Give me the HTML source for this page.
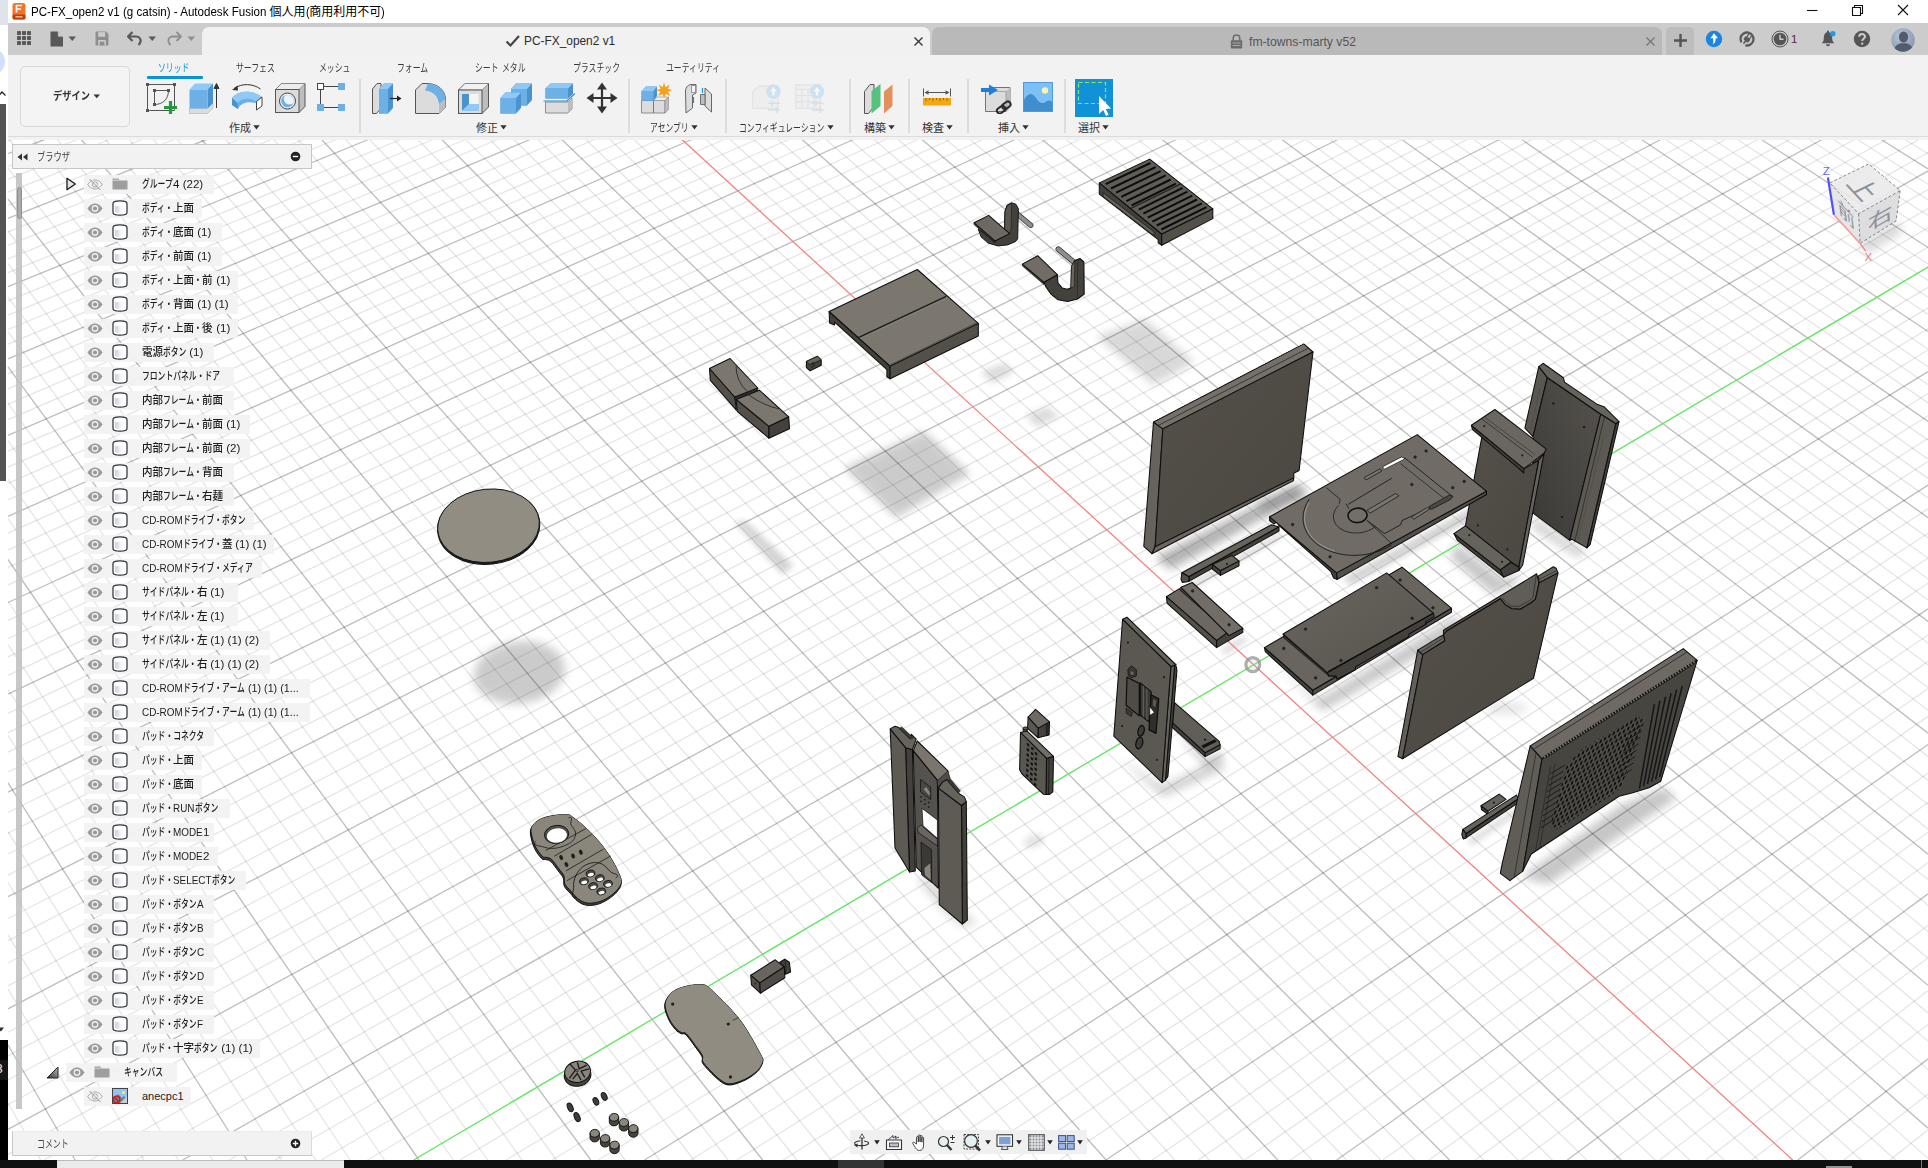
<!DOCTYPE html><html lang="ja"><head><meta charset="utf-8"><title>PC-FX_open2 v1 - Autodesk Fusion</title><style>
*{box-sizing:border-box;margin:0;padding:0}
html,body{width:1928px;height:1168px;overflow:hidden;background:#fff}
body{position:relative;font-family:"Liberation Sans","Noto Sans CJK JP",sans-serif;font-size:11px;color:#222}
.abs{position:absolute}
.k{display:inline-block;transform-origin:0 50%;white-space:pre;vertical-align:baseline}
.t{position:absolute;white-space:nowrap;line-height:1}
#vp{position:absolute;left:0;top:0;width:1928px;height:1168px}
#title{position:absolute;left:8px;top:0;width:1920px;height:23px;background:#fff}
#tabbar{position:absolute;left:8px;top:23px;width:1920px;height:32px;background:#cccccc}
#toolbar{position:absolute;left:8px;top:55px;width:1920px;height:84.5px;background:#f2f2f2}
#toolbar:after{content:'';position:absolute;left:0;top:81px;width:100%;height:1.2px;background:#dbdbdb}
.tab1{position:absolute;left:194px;top:4px;width:728px;height:28px;background:#f1f1f1;border-radius:7px 7px 0 0}
.tab2{position:absolute;left:924px;top:4px;width:730px;height:28px;background:#b9b9b9;border-radius:7px 7px 0 0}
.tab3{position:absolute;left:1658px;top:4px;width:28px;height:28px;background:#bdbdbd;border-radius:5px 5px 0 0}
.sep{position:absolute;top:24px;width:1.6px;height:53.5px;background:#dcdcdc}
.row{position:absolute;height:19.6px;background:rgba(242,242,242,.94)}
.lbl{position:absolute;white-space:nowrap;line-height:14px;font-size:11px;color:#1c1c1c;font-weight:500}
.glbl{position:absolute;white-space:nowrap;line-height:14px;font-size:11px;color:#333}
.hdr{position:absolute;left:12px;width:300px;height:25px;background:#f2f2f2;border:1px solid #c6c6c6}
</style></head><body>
<svg id="vp" viewBox="0 0 1928 1168" width="1928" height="1168">
<defs><filter id="bl8" x="-40%" y="-40%" width="180%" height="180%"><feGaussianBlur stdDeviation="8"/></filter><filter id="bl5" x="-40%" y="-40%" width="180%" height="180%"><feGaussianBlur stdDeviation="5"/></filter><filter id="bl4" x="-40%" y="-40%" width="180%" height="180%"><feGaussianBlur stdDeviation="4"/></filter><filter id="bl3" x="-40%" y="-40%" width="180%" height="180%"><feGaussianBlur stdDeviation="3"/></filter><linearGradient id="gf" x1="0" y1="0" x2="1" y2="1"><stop offset="0" stop-color="#55514a"/><stop offset="1" stop-color="#4a4640"/></linearGradient><linearGradient id="gd" x1="1" y1="0" x2="0" y2="1"><stop offset="0" stop-color="#56534e"/><stop offset="1" stop-color="#3b3936"/></linearGradient><linearGradient id="gt" x1="0" y1="0" x2="1" y2="1"><stop offset="0" stop-color="#6a665f"/><stop offset="1" stop-color="#56534d"/></linearGradient></defs>
<rect x="0" y="0" width="1928" height="1168" fill="#fff"/>
<path d="M8.0 141.2L16.3 138.0M8.0 166.4L81.0 138.0M8.0 179.2L113.4 138.0M8.0 192.1L145.7 138.0M8.0 205.2L178.0 138.0M8.0 231.8L242.7 138.0M8.0 245.3L275.0 138.0M8.0 258.9L307.4 138.0M8.0 272.7L339.7 138.0M8.0 300.8L404.4 138.0M8.0 315.1L436.7 138.0M8.0 329.5L469.0 138.0M8.0 344.1L501.3 138.0M8.0 373.8L566.0 138.0M8.0 388.9L598.3 138.0M8.0 404.2L630.6 138.0M8.0 419.6L662.9 138.0M8.0 451.1L727.5 138.0M8.0 467.1L759.8 138.0M8.0 483.3L792.1 138.0M8.0 499.8L824.4 138.0M8.0 533.2L889.0 138.0M8.0 550.2L921.3 138.0M8.0 567.4L953.6 138.0M8.0 584.9L985.9 138.0M8.0 620.4L1050.5 138.0M8.0 638.5L1082.8 138.0M8.0 656.8L1115.1 138.0M8.0 675.4L1147.3 138.0M8.0 713.3L1211.9 138.0M8.0 732.6L1244.2 138.0M8.0 752.2L1276.5 138.0M8.0 772.0L1308.7 138.0M8.0 812.5L1373.3 138.0M8.0 833.1L1405.5 138.0M8.0 854.0L1437.8 138.0M8.0 875.2L1470.1 138.0M8.0 918.5L1534.6 138.0M8.0 940.6L1566.8 138.0M8.0 963.0L1599.1 138.0M8.0 985.8L1631.4 138.0M8.0 1032.2L1695.9 138.0M8.0 1055.9L1728.1 138.0M8.0 1080.0L1760.4 138.0M8.0 1104.5L1792.6 138.0M8.0 1154.4L1857.1 138.0M44.1 1160.0L1889.3 138.0M90.3 1160.0L1921.6 138.0M136.5 1160.0L1928.0 152.5M228.9 1160.0L1928.0 189.6M275.0 1160.0L1928.0 208.5M321.2 1160.0L1928.0 227.8M367.4 1160.0L1928.0 247.3M459.8 1160.0L1928.0 287.4M506.0 1160.0L1928.0 307.9M552.1 1160.0L1928.0 328.8M598.3 1160.0L1928.0 350.0M690.6 1160.0L1928.0 393.5M736.8 1160.0L1928.0 415.8M783.0 1160.0L1928.0 438.5M829.1 1160.0L1928.0 461.6M921.4 1160.0L1928.0 508.9M967.6 1160.0L1928.0 533.3M1013.7 1160.0L1928.0 558.0M1059.9 1160.0L1928.0 583.2M1152.1 1160.0L1928.0 635.0M1198.3 1160.0L1928.0 661.6M1244.4 1160.0L1928.0 688.7M1290.5 1160.0L1928.0 716.4M1382.8 1160.0L1928.0 773.2M1428.9 1160.0L1928.0 802.5M1475.0 1160.0L1928.0 832.3M1521.2 1160.0L1928.0 862.8M1613.4 1160.0L1928.0 925.5M1659.5 1160.0L1928.0 957.8M1705.6 1160.0L1928.0 990.8M1751.7 1160.0L1928.0 1024.4M1843.9 1160.0L1928.0 1094.0M1890.0 1160.0L1928.0 1129.8" stroke="#000" stroke-opacity=".10" stroke-width="1.3" fill="none"/>
<path d="M8.0 1103.0L40.7 1160.0M8.0 989.0L109.5 1160.0M8.0 934.8L143.9 1160.0M8.0 882.5L178.2 1160.0M8.0 831.9L212.6 1160.0M8.0 735.4L281.4 1160.0M8.0 689.3L315.8 1160.0M8.0 644.7L350.1 1160.0M8.0 601.5L384.5 1160.0M8.0 518.7L453.3 1160.0M8.0 479.2L487.6 1160.0M8.0 440.7L522.0 1160.0M8.0 403.3L556.4 1160.0M8.0 331.6L625.1 1160.0M8.0 297.2L659.5 1160.0M8.0 263.6L693.9 1160.0M8.0 231.0L728.2 1160.0M8.0 168.2L796.9 1160.0M8.0 138.0L831.3 1160.0M32.0 138.0L865.6 1160.0M56.0 138.0L900.0 1160.0M104.1 138.0L968.7 1160.0M128.1 138.0L1003.1 1160.0M152.1 138.0L1037.4 1160.0M176.1 138.0L1071.8 1160.0M224.2 138.0L1140.4 1160.0M248.2 138.0L1174.8 1160.0M272.2 138.0L1209.1 1160.0M296.2 138.0L1243.5 1160.0M344.2 138.0L1312.1 1160.0M368.2 138.0L1346.5 1160.0M392.3 138.0L1380.8 1160.0M416.3 138.0L1415.1 1160.0M464.3 138.0L1483.8 1160.0M488.3 138.0L1518.1 1160.0M512.3 138.0L1552.5 1160.0M536.3 138.0L1586.8 1160.0M584.3 138.0L1655.4 1160.0M608.3 138.0L1689.7 1160.0M632.3 138.0L1724.1 1160.0M656.3 138.0L1758.4 1160.0M704.3 138.0L1827.0 1160.0M728.3 138.0L1861.3 1160.0M752.3 138.0L1895.6 1160.0M776.3 138.0L1928.0 1158.3M824.2 138.0L1928.0 1098.6M848.2 138.0L1928.0 1069.5M872.2 138.0L1928.0 1041.0M896.2 138.0L1928.0 1012.9M944.2 138.0L1928.0 958.2M968.2 138.0L1928.0 931.5M992.2 138.0L1928.0 905.3M1016.1 138.0L1928.0 879.5M1064.1 138.0L1928.0 829.2M1088.1 138.0L1928.0 804.6M1112.1 138.0L1928.0 780.4M1136.0 138.0L1928.0 756.6M1184.0 138.0L1928.0 710.2M1208.0 138.0L1928.0 687.5M1231.9 138.0L1928.0 665.1M1255.9 138.0L1928.0 643.1M1303.8 138.0L1928.0 600.1M1327.8 138.0L1928.0 579.0M1351.8 138.0L1928.0 558.3M1375.7 138.0L1928.0 537.9M1423.7 138.0L1928.0 497.9M1447.6 138.0L1928.0 478.4M1471.6 138.0L1928.0 459.1M1495.6 138.0L1928.0 440.1M1543.5 138.0L1928.0 402.9M1567.4 138.0L1928.0 384.7M1591.4 138.0L1928.0 366.7M1615.4 138.0L1928.0 349.0M1663.3 138.0L1928.0 314.2M1687.2 138.0L1928.0 297.2M1711.2 138.0L1928.0 280.4M1735.1 138.0L1928.0 263.9M1783.0 138.0L1928.0 231.4M1807.0 138.0L1928.0 215.5M1830.9 138.0L1928.0 199.7M1854.9 138.0L1928.0 184.2M1902.8 138.0L1928.0 153.8M1926.7 138.0L1928.0 138.8" stroke="#000" stroke-opacity=".10" stroke-width="1.3" fill="none"/>
<path d="M8.0 153.7L48.7 138.0M8.0 218.4L210.4 138.0M8.0 286.7L372.0 138.0M8.0 358.9L533.6 138.0M8.0 435.3L695.2 138.0M8.0 516.4L856.7 138.0M8.0 602.5L1018.2 138.0M8.0 694.2L1179.6 138.0M8.0 792.1L1341.0 138.0M8.0 896.7L1502.3 138.0M8.0 1008.8L1663.6 138.0M8.0 1129.3L1824.8 138.0M182.7 1160.0L1928.0 170.9M644.5 1160.0L1928.0 371.6M875.3 1160.0L1928.0 485.1M1106.0 1160.0L1928.0 608.9M1336.7 1160.0L1928.0 744.5M1567.3 1160.0L1928.0 893.8M1797.8 1160.0L1928.0 1058.8" stroke="#000" stroke-opacity=".255" stroke-width="1.35" fill="none"/>
<path d="M8.0 1045.0L75.1 1160.0M8.0 782.8L247.0 1160.0M8.0 559.5L418.9 1160.0M8.0 366.9L590.8 1160.0M8.0 199.2L762.6 1160.0M80.0 138.0L934.4 1160.0M200.1 138.0L1106.1 1160.0M320.2 138.0L1277.8 1160.0M440.3 138.0L1449.5 1160.0M560.3 138.0L1621.1 1160.0M800.3 138.0L1928.0 1128.2M920.2 138.0L1928.0 985.3M1040.1 138.0L1928.0 854.1M1160.0 138.0L1928.0 733.2M1279.9 138.0L1928.0 621.4M1399.7 138.0L1928.0 517.7M1519.5 138.0L1928.0 421.4M1639.3 138.0L1928.0 331.5M1759.1 138.0L1928.0 247.5M1878.8 138.0L1928.0 168.9" stroke="#000" stroke-opacity=".255" stroke-width="1.35" fill="none"/>
<g><path d="M1154.7 557.6L1298.0 483.7L1304.9 495.2L1170.8 569.2Z" fill="#000" opacity="0.3" filter="url(#bl5)"/><path d="M1189.3 584.2L1279.5 533.4L1281.8 536.8L1194.0 586.5Z" fill="#000" opacity="0.2" filter="url(#bl3)"/><ellipse cx="519.5" cy="672.5" rx="46" ry="31" transform="rotate(-8 519.5 672.5)" fill="#000" opacity=".2" filter="url(#bl5)"/><path d="M844.3 468.1L924.1 431.1L970.3 473.7L896.1 517.9Z" fill="#000" opacity="0.2" filter="url(#bl4)"/><path d="M1096.4 336.4L1145.4 319.0L1194.4 362.2L1153.8 385.4Z" fill="#000" opacity="0.15" filter="url(#bl4)"/><path d="M980.1 372.3L1003.9 362.2L1015.1 371.4L992.7 383.5Z" fill="#000" opacity="0.13" filter="url(#bl3)"/><path d="M1024.9 415.4L1047.3 406.4L1059.9 416.2L1037.5 427.5Z" fill="#000" opacity="0.13" filter="url(#bl3)"/><path d="M735.0 522.7L744.8 519.9L793.8 566.1L782.6 574.5Z" fill="#000" opacity="0.17" filter="url(#bl3)"/><path d="M1255.0 501.5L1303.0 484.1L1310.3 495.7L1263.7 513.2Z" fill="#000" opacity="0.15" filter="url(#bl5)"/><path d="M1342.3 578.7L1487.9 498.6L1493.8 507.3L1351.1 584.5Z" fill="#000" opacity="0.18" filter="url(#bl3)"/><path d="M1456.4 542.6L1503.5 580.0L1520.6 572.5L1514.2 585.3L1492.8 593.9L1450.0 557.5Z" fill="#000" opacity="0.22" filter="url(#bl5)"/><path d="M1535.6 516.9L1569.8 542.6L1586.9 550.0L1578.4 558.6L1531.3 527.6Z" fill="#000" opacity="0.18" filter="url(#bl5)"/><path d="M1275.8 662.9L1317.6 699.9L1455.9 616.3L1465.5 629.1L1322.4 711.1Z" fill="#000" opacity="0.22" filter="url(#bl5)"/><path d="M1221.1 650.0L1243.6 635.6L1247.6 640.4L1224.3 654.9Z" fill="#000" opacity="0.15" filter="url(#bl3)"/><path d="M1493.0 701.9L1526.9 703.8L1523.1 713.2L1485.5 715.1Z" fill="#000" opacity="0.1" filter="url(#bl5)"/><path d="M1119.1 758.0L1163.0 786.1L1222.7 758.0L1224.5 768.5L1163.0 796.6Z" fill="#000" opacity="0.2" filter="url(#bl5)"/><path d="M1173.5 733.4L1205.1 758.0L1220.9 751.0L1224.5 758.0L1205.1 768.5Z" fill="#000" opacity="0.15" filter="url(#bl3)"/><path d="M914.3 874.9L939.3 907.6L962.4 926.9L977.9 924.0L933.6 880.6Z" fill="#000" opacity="0.14" filter="url(#bl5)"/><path d="M1520.6 877.5L1621.2 804.8L1664.0 787.7L1676.8 798.4L1548.4 884.0Z" fill="#000" opacity="0.22" filter="url(#bl5)"/><path d="M1467.1 841.2L1514.2 809.1L1518.5 813.3L1471.4 845.4Z" fill="#000" opacity="0.15" filter="url(#bl3)"/><path d="M1834.9 216.8L1860.1 244.0L1896.1 221.9L1903.8 231.2L1866.8 253.8Z" fill="#000" opacity="0.16" filter="url(#bl5)"/><ellipse cx="1034" cy="841" rx="11" ry="6.5" transform="rotate(-20 1034 841)" fill="#000" opacity=".1" filter="url(#bl3)"/></g>
<path d="M680.3 138.0L1792.7 1160.0" stroke="#f27f7f" stroke-width="1.25" fill="none"/>
<path d="M413.6 1160.0L1928.0 267.2" stroke="#62e662" stroke-width="1.35" fill="none"/>
<g><path d="M1153.5 422.0L1162.8 428.9L1155.1 546.8L1151.9 553.7L1143.8 546.3Z" fill="#66635c" stroke="#0e0e0e" stroke-width="1.05" stroke-linejoin="round" /><path d="M1153.5 422.0L1303.7 343.9L1313.0 352.0L1162.8 428.9Z" fill="#75716a" stroke="#0e0e0e" stroke-width="1.05" stroke-linejoin="round" /><path d="M1158.4 425.4L1308.6 348.0" fill="none" stroke="#2a2926" stroke-width="0.8" stroke-linejoin="round" /><path d="M1162.8 428.9L1313.0 352.0L1299.1 470.5L1293.8 473.3L1293.8 477.9L1155.1 547.2Z" fill="url(#gf)" stroke="#0e0e0e" stroke-width="1.05" stroke-linejoin="round" /><path d="M1151.9 553.7L1155.1 546.8L1293.8 477.9L1293.3 480.7Z" fill="#6b675f" stroke="#0e0e0e" stroke-width="1.05" stroke-linejoin="round" /><path d="M1153.0 420.8L1303.3 342.7" fill="none" stroke="#fff" stroke-width="1.3" stroke-linejoin="round" stroke-dasharray="1.1 1.5"/><path d="M1181.9 572.7L1271.4 524.8L1279.0 526.9L1188.9 576.8Z" fill="#66635c" stroke="#0e0e0e" stroke-width="1.05" stroke-linejoin="round" /><path d="M1188.9 576.8L1279.0 526.9L1279.0 531.1L1188.9 581.4Z" fill="#44413c" stroke="#0e0e0e" stroke-width="1.05" stroke-linejoin="round" /><path d="M1181.9 572.7L1188.9 576.8L1188.9 581.4L1182.4 582.4L1181.0 579.6Z" fill="#534f49" stroke="#0e0e0e" stroke-width="1.05" stroke-linejoin="round" /><path d="M1212.4 564.6L1232.1 555.3L1239.0 561.1L1220.5 570.8Z" fill="#66635c" stroke="#0e0e0e" stroke-width="1.05" stroke-linejoin="round" /><path d="M1212.4 564.6L1220.5 570.8L1220.5 575.4L1212.4 569.2Z" fill="#44413c" stroke="#0e0e0e" stroke-width="1.05" stroke-linejoin="round" /><path d="M1220.5 570.8L1239.0 561.1L1239.0 565.7L1220.5 575.4Z" fill="#534f49" stroke="#0e0e0e" stroke-width="1.05" stroke-linejoin="round" /><circle cx="1227.0" cy="564.1" r="1" fill="#111" stroke="none" stroke-width="0.8"/><path d="M1099.3 182.9L1161.7 234.0L1161.7 245.2L1158.2 242.7L1158.2 239.6L1099.3 194.1Z" fill="#44413c" stroke="#0e0e0e" stroke-width="1.05" stroke-linejoin="round" /><path d="M1103.1 192.7L1154.0 231.9L1154.0 235.7L1103.1 196.5Z" fill="#66635c" stroke="#0e0e0e" stroke-width="0.6" stroke-linejoin="round" /><path d="M1161.7 234.0L1212.8 208.8L1212.8 218.6L1161.7 245.2Z" fill="#534f49" stroke="#0e0e0e" stroke-width="1.05" stroke-linejoin="round" /><path d="M1099.3 182.9L1149.7 159.1L1212.8 208.8L1161.7 234.0Z" fill="#5f5c56" stroke="#0e0e0e" stroke-width="1.05" stroke-linejoin="round" /><path d="M1130.6 208.5L1180.6 184.0" fill="none" stroke="#1c1c1c" stroke-width="1.2" stroke-linejoin="round" /><path d="M1105.7 184.2L1150.5 163.0" fill="none" stroke="#0c0c0c" stroke-width="2" stroke-linejoin="round" /><path d="M1110.9 188.5L1155.6 167.1" fill="none" stroke="#0c0c0c" stroke-width="2" stroke-linejoin="round" /><path d="M1116.1 192.7L1160.7 171.2" fill="none" stroke="#0c0c0c" stroke-width="2" stroke-linejoin="round" /><path d="M1121.3 196.9L1165.7 175.4" fill="none" stroke="#0c0c0c" stroke-width="2" stroke-linejoin="round" /><path d="M1126.4 201.2L1170.8 179.5" fill="none" stroke="#0c0c0c" stroke-width="2" stroke-linejoin="round" /><path d="M1131.6 205.4L1175.9 183.6" fill="none" stroke="#0c0c0c" stroke-width="2" stroke-linejoin="round" /><path d="M1138.8 209.6L1182.6 187.9" fill="none" stroke="#0c0c0c" stroke-width="2" stroke-linejoin="round" /><path d="M1143.3 213.6L1187.4 191.7" fill="none" stroke="#0c0c0c" stroke-width="2" stroke-linejoin="round" /><path d="M1147.8 217.6L1192.2 195.6" fill="none" stroke="#0c0c0c" stroke-width="2" stroke-linejoin="round" /><path d="M1152.3 221.6L1197.0 199.5" fill="none" stroke="#0c0c0c" stroke-width="2" stroke-linejoin="round" /><path d="M1156.8 225.5L1201.8 203.3" fill="none" stroke="#0c0c0c" stroke-width="2" stroke-linejoin="round" /><path d="M1161.3 229.5L1206.6 207.2" fill="none" stroke="#0c0c0c" stroke-width="2" stroke-linejoin="round" /><path d="M1013.9 211.3L1030.7 225.3" fill="none" stroke="#2a2a28" stroke-width="5.4" stroke-linejoin="round" stroke-linecap="round"/><path d="M1013.9 211.3L1030.7 225.3" fill="none" stroke="#8e8e8a" stroke-width="4" stroke-linejoin="round" stroke-linecap="round"/><path d="M978.2 229.1L981.0 236.8L988.0 243.1L997.8 245.9L1007.6 244.9L1015.3 241.7L1017.7 238.9L1018.4 208.8L1016.0 204.3L1011.5 202.7L1006.9 205.3L1004.8 211.6L1004.3 232.6L995.0 241.0Z" fill="#44413c" stroke="#0e0e0e" stroke-width=".9" stroke-linejoin="round"/><path d="M1005.1 211.6L1007.3 205.7L1011.5 203.5L1011.1 228.4L1009.7 233.6L1004.5 234.0Z" fill="#5a5751" stroke="#0e0e0e" stroke-width="0.5" stroke-linejoin="round" /><path d="M974.0 222.8L988.7 215.4L1009.7 233.6L995.0 241.0Z" fill="#6d6962" stroke="#0e0e0e" stroke-width="1.05" stroke-linejoin="round" /><path d="M974.0 222.8L995.0 241.0L995.0 243.0L974.4 224.8Z" fill="#33312e" stroke="#0e0e0e" stroke-width="0.6" stroke-linejoin="round" /><path d="M1058.3 249.1L1073.7 262.0" fill="none" stroke="#2a2a28" stroke-width="5.4" stroke-linejoin="round" stroke-linecap="round"/><path d="M1058.3 249.1L1073.7 262.0" fill="none" stroke="#8e8e8a" stroke-width="4" stroke-linejoin="round" stroke-linecap="round"/><path d="M1044.0 282.3L1057.3 274.6L1058.0 283.0L1062.2 287.9L1067.1 289.3L1070.9 287.9L1071.5 266.2L1074.8 260.6L1079.9 258.5L1083.9 262.0L1084.2 294.2L1077.6 299.0L1067.8 301.5L1058.0 299.8L1051.0 294.2L1046.1 287.2Z" fill="#44413c" stroke="#0e0e0e" stroke-width="1.05" stroke-linejoin="round" /><path d="M1071.5 266.2L1074.8 260.6L1074.3 286.5L1070.9 287.9Z" fill="#6a665f" stroke="#0e0e0e" stroke-width="0.5" stroke-linejoin="round" /><path d="M1079.9 258.5L1077.6 262.0L1077.4 299.0" fill="none" stroke="#222" stroke-width="0.6" stroke-linejoin="round" /><path d="M1022.3 264.1L1037.7 255.7L1057.3 274.6L1044.0 282.3Z" fill="#716d66" stroke="#0e0e0e" stroke-width="1.05" stroke-linejoin="round" /><path d="M1022.3 264.1L1044.0 282.3L1044.0 284.4L1022.6 266.0Z" fill="#33312e" stroke="#0e0e0e" stroke-width="0.6" stroke-linejoin="round" /><path d="M829.1 311.5L890.1 366.1L890.1 378.8L886.9 376.7L886.9 369.6L834.6 322.1L834.6 324.9L829.6 323.0Z" fill="#44413c" stroke="#0e0e0e" stroke-width="1.05" stroke-linejoin="round" /><path d="M890.1 366.1L978.3 323.4L978.3 336.0L890.1 378.8Z" fill="#534f49" stroke="#0e0e0e" stroke-width="1.05" stroke-linejoin="round" /><path d="M829.1 311.5L917.3 269.5L978.3 323.4L890.1 366.1Z" fill="#7b776f" stroke="#0e0e0e" stroke-width="1.05" stroke-linejoin="round" /><path d="M858.4 337.6L946.3 296.4" fill="none" stroke="#1c1c1c" stroke-width="1.6" stroke-linejoin="round" /><path d="M859.6 338.7L947.2 297.5" fill="none" stroke="#8d897f" stroke-width="0.7" stroke-linejoin="round" /><path d="M890.5 364.8L977.5 322.4" fill="none" stroke="#2a2926" stroke-width="0.6" stroke-linejoin="round" /><path d="M806.4 361.4L817.5 356.3L821.2 359.8L821.2 365.3L810.1 370.9L806.4 367.7Z" fill="#44413c" stroke="#0e0e0e" stroke-width="1.05" stroke-linejoin="round" /><path d="M806.4 361.4L817.5 356.3L821.2 359.8L810.1 364.8Z" fill="#66635c" stroke="#0e0e0e" stroke-width="0.6" stroke-linejoin="round" /><path d="M810.9 363.7L814.0 362.5L814.0 366.1L810.9 367.4" fill="none" stroke="#111" stroke-width="0.7" stroke-linejoin="round" /><path d="M709.5 368.5L734.8 397.0L736.4 410.1L710.3 380.4Z" fill="#534f49" stroke="#0e0e0e" stroke-width="1.05" stroke-linejoin="round" /><path d="M734.8 397.0L757.8 388.0L757.8 390.8L735.2 400.3Z" fill="#33312e" stroke="#0e0e0e" stroke-width="0.6" stroke-linejoin="round" /><path d="M709.5 368.5L730.1 358.5L757.8 388.0L734.8 397.0Z" fill="#7b776f" stroke="#0e0e0e" stroke-width="1.05" stroke-linejoin="round" /><path d="M736.1 365.8Q735.6 380.4 747.5 391.8" fill="none" stroke="#222" stroke-width=".8"/><path d="M736.1 399.4L768.9 426.3L768.9 438.2L737.2 411.3Z" fill="#534f49" stroke="#0e0e0e" stroke-width="1.05" stroke-linejoin="round" /><path d="M768.9 426.3L788.7 416.8L789.5 428.7L768.9 438.2Z" fill="#44413c" stroke="#0e0e0e" stroke-width="1.05" stroke-linejoin="round" /><path d="M736.1 399.4L759.4 390.2L788.7 416.8L768.9 426.3Z" fill="#7b776f" stroke="#0e0e0e" stroke-width="1.05" stroke-linejoin="round" /><path d="M748.3 394.6Q763.4 405.7 779.2 408.9" fill="none" stroke="#222" stroke-width=".8"/><ellipse cx="488.7" cy="527.0" rx="51.2" ry="37.2" transform="rotate(-6 488.7 527.0)" fill="#1c1c1c" stroke="#111" stroke-width="1" /><ellipse cx="488.5" cy="525.7" rx="51" ry="36.6" transform="rotate(-6 488.5 525.7)" fill="#918d82" stroke="#111" stroke-width="0.9" /><path d="M1538.8 366.7L1547.3 377.4L1533.0 436.6L1524.9 428.1Z" fill="#5a5751" stroke="#0e0e0e" stroke-width="1.05" stroke-linejoin="round" /><path d="M1547.3 377.8L1600.8 414.2L1569.8 540.4L1532.4 512.6L1533.0 436.6Z" fill="url(#gd)" stroke="#0e0e0e" stroke-width="1.05" stroke-linejoin="round" /><path d="M1538.8 366.7L1543.1 363.3L1563.4 377.8L1564.5 382.1L1597.6 404.6L1604.0 406.7L1619.0 421.7L1615.8 423.8L1600.8 414.2L1547.3 377.4Z" fill="#66635c" stroke="#0e0e0e" stroke-width="1.05" stroke-linejoin="round" /><path d="M1600.8 414.2L1615.8 423.8L1586.9 547.9L1572.0 539.3L1569.8 540.4Z" fill="#5c5953" stroke="#0e0e0e" stroke-width="1.05" stroke-linejoin="round" /><path d="M1604.5 416.5L1574.7 541.9" fill="none" stroke="#222" stroke-width="0.7" stroke-linejoin="round" /><path d="M1615.8 423.8L1619.0 421.7L1590.1 544.7L1586.9 547.9Z" fill="#44413c" stroke="#0e0e0e" stroke-width="1.05" stroke-linejoin="round" /><path d="M1539.9 388.5L1530.2 431.3" fill="none" stroke="#3a3835" stroke-width="0.6" stroke-linejoin="round" stroke-dasharray="1 1"/><path d="M1603.6 436.6L1578.4 538.3" fill="none" stroke="#3a3835" stroke-width="0.6" stroke-linejoin="round" stroke-dasharray="1 1"/><circle cx="1553.3" cy="403.5" r="1.2" fill="#1d1d1d" stroke="none" stroke-width="0.8"/><circle cx="1584.1" cy="427.0" r="1.2" fill="#1d1d1d" stroke="none" stroke-width="0.8"/><circle cx="1561.9" cy="516.9" r="1.2" fill="#1d1d1d" stroke="none" stroke-width="0.8"/><path d="M1453.9 533.6L1500.3 569.9L1503.5 576.8L1457.5 540.4Z" fill="#44413c" stroke="#0e0e0e" stroke-width="1.05" stroke-linejoin="round" /><path d="M1482.1 435.6L1523.8 468.7L1538.8 460.2L1518.9 567.2L1511.0 562.2L1465.4 525.9Z" fill="url(#gf)" stroke="#0e0e0e" stroke-width="1.05" stroke-linejoin="round" /><path d="M1538.8 460.2L1544.1 453.1L1522.7 565.0L1518.9 570.4L1518.9 567.2Z" fill="#66635c" stroke="#0e0e0e" stroke-width="1.05" stroke-linejoin="round" /><path d="M1500.3 569.9L1511.0 562.2L1518.9 567.2L1518.9 570.4L1503.5 577.2Z" fill="#44413c" stroke="#0e0e0e" stroke-width="1.05" stroke-linejoin="round" /><path d="M1453.9 533.6L1465.4 525.9L1511.0 561.8L1500.3 569.9Z" fill="#66635c" stroke="#0e0e0e" stroke-width="1.05" stroke-linejoin="round" /><path d="M1471.4 425.3L1523.8 468.7L1523.8 473.0L1518.5 468.1L1482.1 437.7L1472.5 429.6Z" fill="#44413c" stroke="#0e0e0e" stroke-width="1.05" stroke-linejoin="round" /><path d="M1471.4 425.3L1494.9 409.5L1546.3 449.1L1544.1 453.1L1523.8 468.7Z" fill="#6b6760" stroke="#0e0e0e" stroke-width="1.05" stroke-linejoin="round" /><path d="M1481.7 418.9L1532.4 457.0" fill="none" stroke="#222" stroke-width="0.7" stroke-linejoin="round" /><path d="M1484.2 416.8L1535.2 454.8" fill="none" stroke="#222" stroke-width="0.5" stroke-linejoin="round" /><circle cx="1484.2" cy="426.0" r="1.1" fill="#1d1d1d" stroke="none" stroke-width="0.8"/><circle cx="1522.3" cy="455.3" r="1.1" fill="#1d1d1d" stroke="none" stroke-width="0.8"/><circle cx="1477.8" cy="525.4" r="1.1" fill="#1d1d1d" stroke="none" stroke-width="0.8"/><circle cx="1469.3" cy="535.1" r="1.1" fill="#1d1d1d" stroke="none" stroke-width="0.8"/><circle cx="1507.3" cy="549.4" r="1.1" fill="#1d1d1d" stroke="none" stroke-width="0.8"/><circle cx="1502.0" cy="561.8" r="1.1" fill="#1d1d1d" stroke="none" stroke-width="0.8"/><path d="M1269.6 516.8L1336.5 572.9L1337.3 579.4L1333.6 578.0L1330.7 571.4L1278.3 524.8L1276.8 521.9L1273.9 524.1L1269.6 520.5Z" fill="#44413c" stroke="#0e0e0e" stroke-width="1.05" stroke-linejoin="round" /><path d="M1336.5 572.9L1486.5 491.3L1486.5 494.5L1337.3 579.4Z" fill="#534f49" stroke="#0e0e0e" stroke-width="1.05" stroke-linejoin="round" /><path d="M1269.6 516.8L1417.3 434.6L1486.5 491.3L1336.5 572.9Z" fill="#706c65" stroke="#0e0e0e" stroke-width="1.05" stroke-linejoin="round" /><path d="M1326.3 487.7L1340.2 499.3L1339.1 503.7" fill="none" stroke="#1a1a1a" stroke-width="0.8" stroke-linejoin="round" /><path d="M1348.2 504.4L1391.8 478.2" fill="none" stroke="#1a1a1a" stroke-width="0.9" stroke-linejoin="round" /><path d="M1346.0 503.7L1348.9 508.8" fill="none" stroke="#1a1a1a" stroke-width="0.8" stroke-linejoin="round" /><path d="M1404.9 458.1L1451.5 495.7L1428.2 508.8L1402.0 520.5L1400.6 524.8L1384.6 533.6L1367.1 520.5" fill="none" stroke="#1a1a1a" stroke-width="0.9" stroke-linejoin="round" /><path d="M1400.6 463.7L1444.3 498.6" fill="none" stroke="#1a1a1a" stroke-width="0.7" stroke-linejoin="round" /><path d="M1367.1 520.5L1391.8 543.7" fill="none" stroke="#1a1a1a" stroke-width="0.8" stroke-linejoin="round" /><path d="M1278.3 524.8L1308.9 494.2" fill="none" stroke="#1a1a1a" stroke-width="0" stroke-linejoin="round" /><path d="M1364.2 477.5L1380.2 468.8L1381.9 471.0L1365.9 480.0Z" fill="#7a766e" stroke="#0e0e0e" stroke-width="0.7" stroke-linejoin="round" /><path d="M1367.1 510.3L1395.5 493.5L1399.1 495.7L1370.0 513.2Z" fill="#7a766e" stroke="#0e0e0e" stroke-width="0.7" stroke-linejoin="round" /><path d="M1411.5 516.8L1427.5 507.3L1429.7 509.1L1413.7 519.3Z" fill="#7a766e" stroke="#0e0e0e" stroke-width="0.7" stroke-linejoin="round" /><path d="M1382.4 466.9L1401.3 457.1L1404.9 458.1L1402.8 460.0L1384.6 469.2Z" fill="#fff" stroke="#0e0e0e" stroke-width="0.7" stroke-linejoin="round" /><path d="M1429.0 506.6L1449.4 495.0L1453.0 496.4L1450.8 499.3L1431.2 509.5Z" fill="#4a4843" stroke="#0e0e0e" stroke-width="0.7" stroke-linejoin="round" /><path d="M1391.6 545.0L1386.5 547.8L1381.0 550.3L1375.3 552.2L1369.3 553.8L1363.2 554.8L1357.0 555.3L1350.8 555.3L1344.8 554.8L1338.8 553.7L1333.1 552.2L1327.8 550.2L1322.8 547.8L1318.2 545.0L1314.2 541.7L1310.7 538.1L1307.8 534.3L1305.6 530.2L1304.0 525.9L1303.2 521.4L1303.0 516.9L1303.5 512.4L1304.8 507.9L1306.7 503.5L1309.2 499.2" fill="none" stroke="#1a1a1a" stroke-width="0.9" stroke-linejoin="round" /><path d="M1334.6 551.0L1331.6 550.1L1328.7 548.9L1325.9 547.7L1323.3 546.3L1320.8 544.8L1318.4 543.1L1316.2 541.4L1314.2 539.5L1312.3 537.6L1310.6 535.5L1309.2 533.4L1307.9 531.2L1306.8 528.9L1305.9 526.6L1305.3 524.2L1304.8 521.8L1304.6 519.4L1304.6 516.9L1304.8 514.5L1305.2 512.0L1305.9 509.6L1306.7 507.2L1307.8 504.8L1309.0 502.4" fill="none" stroke="#aaa79f" stroke-width="0.8" stroke-linejoin="round" /><path d="M1375.7 526.2L1373.5 527.9L1371.1 529.4L1368.4 530.6L1365.5 531.6L1362.5 532.4L1359.5 532.9L1356.4 533.0L1353.3 532.9L1350.3 532.5L1347.4 531.9L1344.7 530.9L1342.2 529.7L1339.9 528.3L1337.9 526.6L1336.3 524.8L1335.0 522.8L1334.1 520.7L1333.5 518.5L1333.4 516.3L1333.7 514.0L1334.3 511.8L1335.3 509.6L1336.7 507.5L1338.4 505.5" fill="none" stroke="#1a1a1a" stroke-width="0.8" stroke-linejoin="round" /><ellipse cx="1357.6" cy="515.4" rx="9.6" ry="7.2" transform="rotate(-5 1357.6 515.4)" fill="#736f68" stroke="#111" stroke-width="1.6" /><circle cx="1292.6" cy="524.5" r="1.3" fill="#2a2927" stroke="#111" stroke-width="0.5"/><circle cx="1330.0" cy="556.8" r="1.3" fill="#2a2927" stroke="#111" stroke-width="0.5"/><circle cx="1415.1" cy="457.1" r="1.3" fill="#2a2927" stroke="#111" stroke-width="0.5"/><circle cx="1426.1" cy="451.0" r="1.3" fill="#2a2927" stroke="#111" stroke-width="0.5"/><circle cx="1411.8" cy="484.5" r="1.3" fill="#2a2927" stroke="#111" stroke-width="0.5"/><circle cx="1452.7" cy="487.7" r="1.3" fill="#2a2927" stroke="#111" stroke-width="0.5"/><circle cx="1464.2" cy="481.4" r="1.3" fill="#2a2927" stroke="#111" stroke-width="0.5"/><path d="M1166.4 596.7L1216.6 640.4L1216.6 647.6L1167.2 603.4Z" fill="#534f49" stroke="#0e0e0e" stroke-width="1.05" stroke-linejoin="round" /><path d="M1216.6 640.4L1228.3 630.8L1242.8 628.3L1242.8 632.4L1216.6 647.6Z" fill="#44413c" stroke="#0e0e0e" stroke-width="1.05" stroke-linejoin="round" /><path d="M1166.4 596.7L1179.0 588.9L1228.3 632.0L1216.6 640.4Z" fill="#6c6861" stroke="#0e0e0e" stroke-width="1.05" stroke-linejoin="round" /><path d="M1179.0 588.9L1180.9 587.3L1229.1 635.6L1228.3 632.0Z" fill="#44413c" stroke="#0e0e0e" stroke-width="0.5" stroke-linejoin="round" /><path d="M1180.9 587.3L1192.2 582.5L1242.8 628.3L1229.1 635.6Z" fill="#726e67" stroke="#0e0e0e" stroke-width="1.05" stroke-linejoin="round" /><circle cx="1192.6" cy="591.0" r="1.3" fill="#2a2927" stroke="#111" stroke-width="0.5"/><circle cx="1229.1" cy="624.8" r="1.3" fill="#2a2927" stroke="#111" stroke-width="0.5"/><path d="M1264.5 647.6L1312.8 690.2L1312.8 695.1L1265.3 651.7Z" fill="#44413c" stroke="#0e0e0e" stroke-width="1.05" stroke-linejoin="round" /><path d="M1312.8 690.2L1451.4 608.2L1451.4 612.3L1312.8 695.1Z" fill="#534f49" stroke="#0e0e0e" stroke-width="1.05" stroke-linejoin="round" /><path d="M1264.5 647.6L1402.0 567.2L1451.4 608.2L1312.8 690.2Z" fill="#69655e" stroke="#0e0e0e" stroke-width="1.05" stroke-linejoin="round" /><path d="M1327.2 672.6L1433.4 613.1L1434.2 616.6L1425.3 621.9L1426.1 624.3L1409.2 634.0L1408.4 636.9L1355.4 666.9L1355.4 669.7L1336.9 679.3L1336.1 676.1L1328.8 676.1Z" fill="#44413c" stroke="#0e0e0e" stroke-width="1.05" stroke-linejoin="round" /><path d="M1283.0 634.0L1327.2 672.6L1328.8 676.1L1283.8 638.0Z" fill="#33312e" stroke="#0e0e0e" stroke-width="0.6" stroke-linejoin="round" /><path d="M1283.0 634.0L1386.7 572.9L1433.4 613.1L1327.2 672.6Z" fill="url(#gt)" stroke="#0e0e0e" stroke-width="1.05" stroke-linejoin="round" /><path d="M1328.4 671.6L1432.1 614.0" fill="none" stroke="#0e0e0e" stroke-width="1.4" stroke-linejoin="round" /><circle cx="1305.5" cy="629.1" r="1.3" fill="#2a2927" stroke="#111" stroke-width="0.5"/><circle cx="1376.6" cy="587.7" r="1.3" fill="#2a2927" stroke="#111" stroke-width="0.5"/><circle cx="1400.1" cy="580.1" r="1.3" fill="#2a2927" stroke="#111" stroke-width="0.5"/><circle cx="1433.0" cy="607.8" r="1.3" fill="#2a2927" stroke="#111" stroke-width="0.5"/><circle cx="1412.1" cy="618.2" r="1.3" fill="#2a2927" stroke="#111" stroke-width="0.5"/><circle cx="1340.9" cy="660.5" r="1.3" fill="#2a2927" stroke="#111" stroke-width="0.5"/><circle cx="1283.8" cy="648.4" r="1.3" fill="#2a2927" stroke="#111" stroke-width="0.5"/><circle cx="1315.7" cy="677.9" r="1.3" fill="#2a2927" stroke="#111" stroke-width="0.5"/><path d="M1417.7 650.1L1422.9 654.8L1402.6 758.8L1397.9 756.5Z" fill="#625f59" stroke="#0e0e0e" stroke-width="1.05" stroke-linejoin="round" /><path d="M1443.5 630.3L1536.7 573.8L1539.1 582.9L1535.4 599.3L1530.7 603.0L1520.3 609.2L1511.8 608.7L1505.2 604.9L1500.5 598.7L1446.3 631.3L1445.0 640.7L1443.5 635.0Z" fill="#605d57" stroke="#0e0e0e" stroke-width="1.05" stroke-linejoin="round" /><path d="M1417.7 650.1L1440.3 636.4L1443.5 635.0L1445.0 640.7L1422.9 654.8Z" fill="#66635c" stroke="#0e0e0e" stroke-width="1.05" stroke-linejoin="round" /><path d="M1420.5 652.4L1442.7 638.4" fill="none" stroke="#222" stroke-width="0.6" stroke-linejoin="round" /><path d="M1538.2 576.1L1553.3 566.7L1556.1 568.2L1558.0 572.9L1539.1 582.9Z" fill="#66635c" stroke="#0e0e0e" stroke-width="1.05" stroke-linejoin="round" /><path d="M1538.8 579.5L1557.0 570.4" fill="none" stroke="#222" stroke-width="0.6" stroke-linejoin="round" /><path d="M1422.9 654.4L1445.0 640.7L1443.5 635.0L1446.3 631.3L1500.5 598.7L1505.2 604.9L1511.8 608.7L1520.3 609.2L1530.7 603.0L1535.4 599.3L1539.1 582.9L1558.0 572.9L1533.5 678.4L1402.6 758.8Z" fill="url(#gf)" stroke="#0e0e0e" stroke-width="1.05" stroke-linejoin="round" /><path d="M1536.3 574.8L1532.9 597.9L1528.8 601.1L1519.4 606.2L1511.8 606.2L1506.6 603.0L1502.4 597.9" fill="none" stroke="#222" stroke-width="0.6" stroke-linejoin="round" /><path d="M1172.7 722.9L1205.1 752.7L1205.1 756.6L1171.8 726.8Z" fill="#44413c" stroke="#0e0e0e" stroke-width="1.05" stroke-linejoin="round" /><path d="M1205.1 752.7L1220.1 744.8L1220.1 748.7L1205.1 756.6Z" fill="#534f49" stroke="#0e0e0e" stroke-width="1.05" stroke-linejoin="round" /><path d="M1174.4 702.7L1219.2 741.3L1220.1 744.8L1205.1 752.7L1172.7 722.9Z" fill="#615e58" stroke="#0e0e0e" stroke-width="1.05" stroke-linejoin="round" /><path d="M1201.6 745.7L1214.8 739.6L1216.6 741.5L1203.4 748.0Z" fill="#111" stroke="#0e0e0e" stroke-width="0.4" stroke-linejoin="round" /><circle cx="1205.1" cy="739.6" r="1.2" fill="#1d1d1d" stroke="none" stroke-width="0.8"/><path d="M1122.6 619.3L1127.0 617.2L1176.2 665.0L1170.9 666.7Z" fill="#66635c" stroke="#0e0e0e" stroke-width="1.05" stroke-linejoin="round" /><path d="M1174.4 665.3L1176.3 666.7L1176.9 670.6L1167.9 776.4L1165.3 780.1Z" fill="#45423e" stroke="#0e0e0e" stroke-width="1.05" stroke-linejoin="round" /><path d="M1170.9 666.7L1174.6 665.3L1165.5 780.1L1162.1 782.6Z" fill="#66635c" stroke="#0e0e0e" stroke-width="1.05" stroke-linejoin="round" /><path d="M1122.6 619.3L1170.9 666.7L1162.1 782.6L1113.8 736.1Z" fill="#5b5852" stroke="#0e0e0e" stroke-width="1.05" stroke-linejoin="round" /><path d="M1127.0 677.2L1139.3 683.4L1139.3 715.9L1126.1 705.3Z" fill="#4f4c47" stroke="#0e0e0e" stroke-width="1.2" stroke-linejoin="round" /><path d="M1127.9 669.3L1131.4 665.8L1136.3 669.7L1136.3 675.8L1131.8 677.6L1128.2 675.8Z" fill="#3c3a37" stroke="#0e0e0e" stroke-width="0.8" stroke-linejoin="round" /><path d="M1130.0 670.2L1134.0 671.6L1134.0 675.8L1130.0 674.6Z" fill="#6a665f" stroke="#0e0e0e" stroke-width="0.5" stroke-linejoin="round" /><path d="M1140.2 682.9L1151.1 691.6L1150.7 722.9L1140.2 715.0Z" fill="#3b3936" stroke="#0e0e0e" stroke-width="1.2" stroke-linejoin="round" /><path d="M1143.3 686.0L1143.3 717.3" fill="none" stroke="#6a665f" stroke-width="1" stroke-linejoin="round" /><path d="M1146.9 688.7L1146.9 719.9" fill="none" stroke="#6a665f" stroke-width="1" stroke-linejoin="round" /><path d="M1151.1 694.8L1158.8 698.7L1156.0 733.4L1149.0 729.9Z" fill="#2f2e2b" stroke="#0e0e0e" stroke-width="1.2" stroke-linejoin="round" /><path d="M1152.8 698.3L1157.0 700.4L1155.6 708.8L1152.1 705.3Z" fill="#5b5852" stroke="#0e0e0e" stroke-width="0.5" stroke-linejoin="round" /><path d="M1149.8 707.1L1154.2 712.4L1149.8 715.2Z" fill="#fff" stroke="#0e0e0e" stroke-width="0.4" stroke-linejoin="round" /><path d="M1126.1 708.0L1132.3 712.4L1131.4 716.7L1126.1 713.2Z" fill="#3b3936" stroke="#0e0e0e" stroke-width="0.6" stroke-linejoin="round" /><ellipse cx="1141.1" cy="730.8" rx="3" ry="5.4" transform="rotate(14 1141.1 730.8)" fill="#3f3d39" stroke="#0c0c0c" stroke-width="1.3" /><ellipse cx="1139.3" cy="743.1" rx="3.3" ry="5.8" transform="rotate(14 1139.3 743.1)" fill="#3f3d39" stroke="#0c0c0c" stroke-width="1.3" /><circle cx="1127.9" cy="642.7" r="1.1" fill="#1d1d1d" stroke="none" stroke-width="0.8"/><circle cx="1163.9" cy="677.2" r="1.1" fill="#1d1d1d" stroke="none" stroke-width="0.8"/><circle cx="1122.3" cy="726.1" r="1.1" fill="#1d1d1d" stroke="none" stroke-width="0.8"/><circle cx="1156.9" cy="759.8" r="1.1" fill="#1d1d1d" stroke="none" stroke-width="0.8"/><path d="M1038.2 728.1L1049.5 721.9L1049.1 735.0L1037.8 737.7Z" fill="#44413c" stroke="#0e0e0e" stroke-width="1.05" stroke-linejoin="round" /><path d="M1046.1 724.7L1048.2 723.6L1048.0 735.0L1046.3 735.8Z" fill="#2e2c29" stroke="#0e0e0e" stroke-width="0.5" stroke-linejoin="round" /><path d="M1028.1 717.0L1038.2 728.1L1037.8 737.7L1027.6 728.3Z" fill="#5a5751" stroke="#0e0e0e" stroke-width="1.05" stroke-linejoin="round" /><path d="M1028.1 717.0L1035.6 709.4L1049.5 721.9L1038.2 728.1Z" fill="#6e6a63" stroke="#0e0e0e" stroke-width="1.05" stroke-linejoin="round" /><path d="M1023.2 728.3V733.4A2.1 1.4 0 0 0 1027.3 733.4V728.3Z" fill="#55524d" stroke="#0e0e0e" stroke-width=".9"/><ellipse cx="1025.3" cy="728.3" rx="2.1" ry="1.4" transform="rotate(0 1025.3 728.3)" fill="#6e6a63" stroke="#0e0e0e" stroke-width="0.9" /><path d="M1046.5 758.4L1053.5 756.3L1052.8 791.9L1049.3 794.5L1046.0 794.5Z" fill="#44413c" stroke="#0e0e0e" stroke-width="1.05" stroke-linejoin="round" /><path d="M1049.1 757.7L1048.5 794.2" fill="none" stroke="#111" stroke-width="0.7" stroke-linejoin="round" /><path d="M1020.5 732.5L1027.1 731.1L1053.5 756.3L1046.5 758.4Z" fill="#726e67" stroke="#0e0e0e" stroke-width="1.05" stroke-linejoin="round" /><path d="M1020.5 732.5L1046.5 758.4L1046.0 794.5L1043.2 794.2L1022.4 774.4L1019.6 769.7Z" fill="#5a5751" stroke="#0e0e0e" stroke-width="1.05" stroke-linejoin="round" /><rect x="1026.8" y="743.4" width="2.5" height="2.7" rx=".6" fill="#141414" transform="skewY(28)" transform-origin="1028.1 744.8"/><rect x="1026.7" y="748.5" width="2.5" height="2.7" rx=".6" fill="#141414" transform="skewY(28)" transform-origin="1027.9 749.9"/><rect x="1026.5" y="753.7" width="2.5" height="2.7" rx=".6" fill="#141414" transform="skewY(28)" transform-origin="1027.8 755.0"/><rect x="1026.4" y="758.8" width="2.5" height="2.7" rx=".6" fill="#141414" transform="skewY(28)" transform-origin="1027.6 760.2"/><rect x="1026.2" y="763.9" width="2.5" height="2.7" rx=".6" fill="#141414" transform="skewY(28)" transform-origin="1027.5 765.3"/><rect x="1026.1" y="769.1" width="2.5" height="2.7" rx=".6" fill="#141414" transform="skewY(28)" transform-origin="1027.3 770.4"/><rect x="1025.9" y="774.2" width="2.5" height="2.7" rx=".6" fill="#141414" transform="skewY(28)" transform-origin="1027.2 775.6"/><rect x="1031.1" y="747.2" width="2.5" height="2.7" rx=".6" fill="#141414" transform="skewY(28)" transform-origin="1032.3 748.5"/><rect x="1030.9" y="752.3" width="2.5" height="2.7" rx=".6" fill="#141414" transform="skewY(28)" transform-origin="1032.1 753.7"/><rect x="1030.7" y="757.4" width="2.5" height="2.7" rx=".6" fill="#141414" transform="skewY(28)" transform-origin="1031.9 758.8"/><rect x="1030.5" y="762.6" width="2.5" height="2.7" rx=".6" fill="#141414" transform="skewY(28)" transform-origin="1031.8 763.9"/><rect x="1030.3" y="767.7" width="2.5" height="2.7" rx=".6" fill="#141414" transform="skewY(28)" transform-origin="1031.6 769.1"/><rect x="1030.1" y="772.8" width="2.5" height="2.7" rx=".6" fill="#141414" transform="skewY(28)" transform-origin="1031.4 774.2"/><rect x="1029.9" y="778.0" width="2.5" height="2.7" rx=".6" fill="#141414" transform="skewY(28)" transform-origin="1031.2 779.3"/><rect x="1034.8" y="752.4" width="2.5" height="2.7" rx=".6" fill="#141414" transform="skewY(28)" transform-origin="1036.1 753.7"/><rect x="1034.7" y="757.5" width="2.5" height="2.7" rx=".6" fill="#141414" transform="skewY(28)" transform-origin="1035.9 758.8"/><rect x="1034.5" y="762.6" width="2.5" height="2.7" rx=".6" fill="#141414" transform="skewY(28)" transform-origin="1035.8 764.0"/><rect x="1034.4" y="767.8" width="2.5" height="2.7" rx=".6" fill="#141414" transform="skewY(28)" transform-origin="1035.6 769.1"/><rect x="1034.2" y="772.9" width="2.5" height="2.7" rx=".6" fill="#141414" transform="skewY(28)" transform-origin="1035.5 774.2"/><rect x="1034.1" y="778.0" width="2.5" height="2.7" rx=".6" fill="#141414" transform="skewY(28)" transform-origin="1035.3 779.4"/><rect x="1033.9" y="783.2" width="2.5" height="2.7" rx=".6" fill="#141414" transform="skewY(28)" transform-origin="1035.2 784.5"/><path d="M905.6 747.7L912.4 749.7L915.3 871.0L909.5 872.0Z" fill="#44413c" stroke="#0e0e0e" stroke-width="1.05" stroke-linejoin="round" /><path d="M890.2 728.9L905.6 747.7L909.5 872.0L895.0 847.9Z" fill="#5d5a54" stroke="#0e0e0e" stroke-width="1.05" stroke-linejoin="round" /><path d="M890.2 728.9L895.0 726.2L898.9 727.5L909.5 738.1L911.4 734.3L916.2 739.1L912.4 749.7L905.6 747.7Z" fill="#66635c" stroke="#0e0e0e" stroke-width="1.05" stroke-linejoin="round" /><path d="M898.9 728.5L901.8 726.9L913.3 737.7L910.4 739.3Z" fill="#3b3936" stroke="#0e0e0e" stroke-width="0.5" stroke-linejoin="round" /><path d="M913.3 750.6L937.4 780.5L938.4 888.3L916.2 867.2Z" fill="#55524d" stroke="#0e0e0e" stroke-width="1.05" stroke-linejoin="round" /><path d="M917.2 741.0L948.0 770.9L944.2 778.6L938.4 781.4L913.3 750.6Z" fill="#7a766e" stroke="#0e0e0e" stroke-width="1.05" stroke-linejoin="round" /><path d="M922.0 808.4L937.4 820.0L937.4 838.3L923.0 825.7Z" fill="#fff" stroke="#0e0e0e" stroke-width="0.7" stroke-linejoin="round" /><path d="M920.5 779.5L930.7 787.2L930.7 799.7L920.5 792.0Z" fill="#4a4843" stroke="#0e0e0e" stroke-width="0.7" stroke-linejoin="round" /><path d="M923.0 789.2L926.2 786.3L930.1 792.0L930.1 796.9Z" fill="#8a867c" stroke="#0e0e0e" stroke-width="0.4" stroke-linejoin="round" /><path d="M917.2 828.6L921.0 824.8L924.9 828.6L937.4 839.2L937.4 846.0L918.2 832.5Z" fill="#6a665f" stroke="#0e0e0e" stroke-width="0.7" stroke-linejoin="round" /><path d="M921.0 842.1L931.6 849.8L931.6 882.6L921.6 874.9Z" fill="#3b3936" stroke="#0e0e0e" stroke-width="0.7" stroke-linejoin="round" /><path d="M923.9 868.1L930.7 862.3L931.2 881.0L924.5 875.2Z" fill="#8a867c" stroke="#0e0e0e" stroke-width="0.5" stroke-linejoin="round" /><path d="M937.0 780.9L948.0 770.9L951.9 784.7L938.4 788.6Z" fill="#4f4c47" stroke="#0e0e0e" stroke-width="0.6" stroke-linejoin="round" /><path d="M961.5 805.5L966.3 801.7L967.3 920.1L962.4 924.0Z" fill="#44413c" stroke="#0e0e0e" stroke-width="1.05" stroke-linejoin="round" /><path d="M938.4 788.2L961.5 805.5L962.4 924.0L939.3 904.7Z" fill="#5e5b55" stroke="#0e0e0e" stroke-width="1.05" stroke-linejoin="round" /><path d="M938.4 788.2L942.2 782.4L947.0 779.5L950.9 784.3L959.6 794.0L964.4 796.9L966.3 801.7L961.5 805.5Z" fill="#66635c" stroke="#0e0e0e" stroke-width="1.05" stroke-linejoin="round" /><path d="M948.0 781.4L950.9 779.5L960.5 791.1L958.2 793.0Z" fill="#3b3936" stroke="#0e0e0e" stroke-width="0.5" stroke-linejoin="round" /><circle cx="921.0" cy="796.9" r="0.9" fill="#1d1d1d" stroke="none" stroke-width="0.8"/><circle cx="924.9" cy="799.7" r="0.9" fill="#1d1d1d" stroke="none" stroke-width="0.8"/><circle cx="928.7" cy="802.6" r="0.9" fill="#1d1d1d" stroke="none" stroke-width="0.8"/><circle cx="921.0" cy="801.3" r="0.9" fill="#1d1d1d" stroke="none" stroke-width="0.8"/><circle cx="924.9" cy="804.2" r="0.9" fill="#1d1d1d" stroke="none" stroke-width="0.8"/><circle cx="928.7" cy="807.1" r="0.9" fill="#1d1d1d" stroke="none" stroke-width="0.8"/><circle cx="1252.8" cy="664.6" r="7.0" fill="#bbb" fill-opacity=".25" stroke="#8f8f8f" stroke-width="3.2" opacity=".72"/><path d="M1481.0 805.8L1499.2 794.1L1506.1 799.4L1487.9 811.2Z" fill="#66635c" stroke="#0e0e0e" stroke-width="1.05" stroke-linejoin="round" /><path d="M1481.0 805.8L1487.9 811.2L1487.9 814.4L1481.5 809.5Z" fill="#44413c" stroke="#0e0e0e" stroke-width="1.05" stroke-linejoin="round" /><circle cx="1493.9" cy="802.6" r="1.1" fill="#1d1d1d" stroke="none" stroke-width="0.8"/><path d="M1462.8 829.4L1516.3 795.1L1518.5 798.8L1466.0 833.7Z" fill="#66635c" stroke="#0e0e0e" stroke-width="1.05" stroke-linejoin="round" /><path d="M1466.0 833.7L1518.5 798.8L1518.5 802.6L1466.0 837.9Z" fill="#44413c" stroke="#0e0e0e" stroke-width="1.05" stroke-linejoin="round" /><path d="M1462.8 829.4L1466.0 833.7L1466.0 837.9L1463.3 839.0L1461.8 834.7Z" fill="#534f49" stroke="#0e0e0e" stroke-width="1.05" stroke-linejoin="round" /><path d="M1530.2 745.9L1542.0 758.8L1522.8 871.1L1509.9 880.7L1500.3 873.3L1502.4 862.6Z" fill="#605d57" stroke="#0e0e0e" stroke-width="1.05" stroke-linejoin="round" /><path d="M1536.0 753.0L1514.2 877.1" fill="none" stroke="#222" stroke-width="0.7" stroke-linejoin="round" /><path d="M1542.0 758.8L1697.2 660.3L1660.8 781.2L1649.0 787.7L1631.9 793.0L1619.1 796.2L1531.3 854.0L1522.8 871.1Z" fill="#474540" stroke="#0e0e0e" stroke-width="1.05" stroke-linejoin="round" /><path d="M1530.2 745.9L1683.3 648.6L1697.2 660.3L1542.0 758.8Z" fill="#6e6a63" stroke="#0e0e0e" stroke-width="1.05" stroke-linejoin="round" /><path d="M1534.7 748.5L1687.1 652.0" fill="none" stroke="#222" stroke-width="0.8" stroke-linejoin="round" /><path d="M1544.2 757.5L1696.1 661.2" fill="none" stroke="#141414" stroke-width="2.8" stroke-linejoin="round" /><path d="M1544.2 757.1L1696.1 660.8" fill="none" stroke="#7d7970" stroke-width="2.4" stroke-linejoin="round" stroke-dasharray="1.4 1.7"/><pattern id="hex" width="5.2" height="10.6" patternUnits="userSpaceOnUse" patternTransform="matrix(.844 -.536 -.169 .986 0 0)"><rect width="5.2" height="10.6" fill="#4d4b46"/><ellipse cx="1.3" cy="2.65" rx="1.55" ry="1.9" fill="#101010"/><ellipse cx="3.9" cy="7.95" rx="1.55" ry="1.9" fill="#101010"/></pattern><path d="M1580.5 750.2L1621.2 725.6L1637.2 716.0L1643.7 720.2L1621.2 787.7L1609.4 796.2L1557.0 829.4L1550.6 824.0L1566.6 766.3Z" fill="url(#hex)" stroke="none" stroke-width="0" stroke-linejoin="round" /><path d="M1654.4 704.2L1639.4 788.7" fill="none" stroke="#151515" stroke-width="1.5" stroke-linejoin="round" /><path d="M1659.9 700.6L1643.5 786.4" fill="none" stroke="#151515" stroke-width="1.5" stroke-linejoin="round" /><path d="M1665.5 696.9L1647.5 784.0" fill="none" stroke="#151515" stroke-width="1.5" stroke-linejoin="round" /><path d="M1671.1 693.3L1651.6 781.7" fill="none" stroke="#151515" stroke-width="1.5" stroke-linejoin="round" /><path d="M1676.6 689.6L1655.6 779.3" fill="none" stroke="#151515" stroke-width="1.5" stroke-linejoin="round" /><path d="M1682.2 686.0L1659.7 777.0" fill="none" stroke="#151515" stroke-width="1.5" stroke-linejoin="round" /><path d="M1550.6 773.7L1564.5 765.2" fill="none" stroke="#1a1a1a" stroke-width="1" stroke-linejoin="round" /><path d="M1549.5 779.7L1563.4 771.2" fill="none" stroke="#1a1a1a" stroke-width="1" stroke-linejoin="round" /><path d="M1548.4 785.7L1562.3 777.2" fill="none" stroke="#1a1a1a" stroke-width="1" stroke-linejoin="round" /><path d="M1547.4 791.7L1561.3 783.2" fill="none" stroke="#1a1a1a" stroke-width="1" stroke-linejoin="round" /><path d="M1546.3 797.7L1560.2 789.2" fill="none" stroke="#1a1a1a" stroke-width="1" stroke-linejoin="round" /><path d="M1545.2 803.7L1559.1 795.1" fill="none" stroke="#1a1a1a" stroke-width="1" stroke-linejoin="round" /><path d="M1544.2 809.7L1558.1 801.1" fill="none" stroke="#1a1a1a" stroke-width="1" stroke-linejoin="round" /><path d="M1543.1 815.7L1557.0 807.1" fill="none" stroke="#1a1a1a" stroke-width="1" stroke-linejoin="round" /><path d="M1542.0 821.7L1555.9 813.1" fill="none" stroke="#1a1a1a" stroke-width="1" stroke-linejoin="round" /><path d="M1540.9 827.7L1554.9 819.1" fill="none" stroke="#1a1a1a" stroke-width="1" stroke-linejoin="round" /><path d="M1627.6 734.2L1643.7 724.5" fill="none" stroke="#1a1a1a" stroke-width="1" stroke-linejoin="round" /><path d="M1626.1 740.6L1642.0 730.9" fill="none" stroke="#1a1a1a" stroke-width="1" stroke-linejoin="round" /><path d="M1624.6 747.0L1640.2 737.4" fill="none" stroke="#1a1a1a" stroke-width="1" stroke-linejoin="round" /><path d="M1623.1 753.4L1638.5 743.8" fill="none" stroke="#1a1a1a" stroke-width="1" stroke-linejoin="round" /><path d="M1621.6 759.8L1636.8 750.2" fill="none" stroke="#1a1a1a" stroke-width="1" stroke-linejoin="round" /><path d="M1620.1 766.3L1635.1 756.6" fill="none" stroke="#1a1a1a" stroke-width="1" stroke-linejoin="round" /><path d="M1618.6 772.7L1633.4 763.0" fill="none" stroke="#1a1a1a" stroke-width="1" stroke-linejoin="round" /><path d="M1617.1 779.1L1631.7 769.5" fill="none" stroke="#1a1a1a" stroke-width="1" stroke-linejoin="round" /><path d="M1550.6 766.3L1535.6 850.8" fill="none" stroke="#222" stroke-width="0.7" stroke-linejoin="round" /><path d="M1554.9 764.1L1539.5 848.6" fill="none" stroke="#222" stroke-width="0.7" stroke-linejoin="round" /><path d="M530.4 833.9C530.1 830.1 530.8 828.2 532.5 825.7C534.2 823.2 537.1 820.7 540.7 819.0C544.3 817.3 549.6 816.1 554.1 815.4C558.5 814.7 564.3 814.4 567.4 814.7C570.5 815.0 569.3 814.6 572.5 817.0C575.8 819.3 582.3 824.4 586.9 828.8C591.6 833.1 596.4 838.4 600.3 843.2C604.2 848.0 607.7 852.9 610.6 857.5C613.5 862.2 616.0 867.0 617.8 870.9C619.6 874.8 621.2 878.1 621.4 881.2C621.5 884.3 620.6 886.7 618.8 889.4C617.0 892.1 613.8 895.2 610.6 897.6C607.3 900.0 603.2 902.5 599.3 903.8C595.3 905.1 590.5 905.8 586.9 905.3C583.3 904.9 580.4 903.2 577.7 901.2C574.9 899.3 572.7 896.0 570.5 893.5C568.3 891.0 565.5 888.9 564.3 886.3C563.1 883.8 564.3 880.7 563.3 878.1C562.3 875.5 560.2 873.6 558.2 870.9C556.1 868.2 553.0 863.5 551.0 861.7C548.9 859.8 547.4 860.1 545.8 859.6C544.3 859.1 543.6 860.5 541.7 858.6C539.8 856.7 536.4 852.4 534.5 848.3C532.6 844.2 530.8 837.7 530.4 833.9Z" fill="#3f3d39" stroke="#111" stroke-width="1"/><clipPath id="cpt"><path d="M530.4 833.9C530.1 830.1 530.8 828.2 532.5 825.7C534.2 823.2 537.1 820.7 540.7 819.0C544.3 817.3 549.6 816.1 554.1 815.4C558.5 814.7 564.3 814.4 567.4 814.7C570.5 815.0 569.3 814.6 572.5 817.0C575.8 819.3 582.3 824.4 586.9 828.8C591.6 833.1 596.4 838.4 600.3 843.2C604.2 848.0 607.7 852.9 610.6 857.5C613.5 862.2 616.0 867.0 617.8 870.9C619.6 874.8 621.2 878.1 621.4 881.2C621.5 884.3 620.6 886.7 618.8 889.4C617.0 892.1 613.8 895.2 610.6 897.6C607.3 900.0 603.2 902.5 599.3 903.8C595.3 905.1 590.5 905.8 586.9 905.3C583.3 904.9 580.4 903.2 577.7 901.2C574.9 899.3 572.7 896.0 570.5 893.5C568.3 891.0 565.5 888.9 564.3 886.3C563.1 883.8 564.3 880.7 563.3 878.1C562.3 875.5 560.2 873.6 558.2 870.9C556.1 868.2 553.0 863.5 551.0 861.7C548.9 859.8 547.4 860.1 545.8 859.6C544.3 859.1 543.6 860.5 541.7 858.6C539.8 856.7 536.4 852.4 534.5 848.3C532.6 844.2 530.8 837.7 530.4 833.9Z"/></clipPath><g clip-path="url(#cpt)"><path d="M531.0 831.7C530.7 827.9 531.4 825.9 533.1 823.4C534.8 820.9 537.7 818.5 541.3 816.8C544.9 815.0 550.2 813.9 554.7 813.2C559.1 812.4 564.9 812.2 568.0 812.4C571.1 812.7 569.9 812.3 573.2 814.7C576.4 817.0 582.9 822.1 587.6 826.5C592.2 830.9 597.0 836.1 600.9 840.9C604.9 845.7 608.3 850.7 611.2 855.3C614.1 859.9 616.6 864.7 618.4 868.6C620.2 872.6 621.8 875.8 622.0 878.9C622.1 882.0 621.2 884.4 619.4 887.1C617.6 889.9 614.4 893.0 611.2 895.4C607.9 897.8 603.8 900.2 599.9 901.5C595.9 902.8 591.1 903.5 587.6 903.1C584.0 902.6 581.0 900.9 578.3 899.0C575.6 897.0 573.3 893.7 571.1 891.3C568.9 888.8 566.1 886.6 564.9 884.1C563.7 881.5 564.9 878.4 563.9 875.8C562.9 873.3 560.8 871.4 558.8 868.6C556.7 865.9 553.6 861.3 551.6 859.4C549.5 857.5 548.0 857.9 546.4 857.3C544.9 856.8 544.2 858.2 542.3 856.3C540.5 854.4 537.0 850.1 535.1 846.0C533.3 841.9 531.4 835.4 531.0 831.7Z" fill="#8a867c" stroke="#111" stroke-width=".9"/></g><path d="M545.8 850.4L585.9 828.6" fill="none" stroke="#1a1a1a" stroke-width="0.8" stroke-linejoin="round" /><path d="M554.1 856.3L591.6 834.4" fill="none" stroke="#1a1a1a" stroke-width="0.8" stroke-linejoin="round" /><path d="M565.9 870.9L603.4 849.1" fill="none" stroke="#1a1a1a" stroke-width="0.8" stroke-linejoin="round" /><path d="M566.9 880.7L610.6 856.0" fill="none" stroke="#1a1a1a" stroke-width="0.8" stroke-linejoin="round" /><path d="M568.4 818.0C574.3 815.2 569.8 822.2 571.0 824.7C572.2 827.1 575.4 830.1 575.6 832.9C575.9 835.6 574.6 838.9 572.5 841.1C570.5 843.3 566.4 845.0 563.3 846.2C560.2 847.4 557.1 848.1 554.1 848.3C551.0 848.5 547.9 848.5 544.8 847.3C541.7 846.1 531.6 846.0 535.6 841.1" fill="none" stroke="#1a1a1a" stroke-width=".8"/><path d="M576.7 897.6C569.6 899.2 573.7 890.9 573.6 887.3C573.4 883.8 574.1 879.5 575.6 876.0C577.2 872.6 579.9 869.0 582.8 866.8C585.7 864.6 589.8 863.1 593.1 862.7C596.4 862.3 599.4 862.7 602.3 864.2C605.3 865.8 608.3 869.6 610.6 871.9C612.8 874.2 621.4 873.8 615.7 878.1" fill="none" stroke="#1a1a1a" stroke-width=".9"/><ellipse cx="556.6" cy="834.4" rx="12.2" ry="9" transform="rotate(-8 556.6 834.4)" fill="#55524d" stroke="#111" stroke-width="0.9" /><ellipse cx="556.9" cy="835.5" rx="10.6" ry="7.6" transform="rotate(-8 556.9 835.5)" fill="#fff" stroke="#222" stroke-width="0.6" /><ellipse cx="561.2" cy="857.5" rx="1.5" ry="2.4" transform="rotate(-20 561.2 857.5)" fill="#1d1d1d" stroke="#111" stroke-width="0.4" /><ellipse cx="573.1" cy="856.0" rx="1.5" ry="2.4" transform="rotate(-20 573.1 856.0)" fill="#1d1d1d" stroke="#111" stroke-width="0.4" /><ellipse cx="580.8" cy="852.2" rx="1.5" ry="2.4" transform="rotate(-20 580.8 852.2)" fill="#1d1d1d" stroke="#111" stroke-width="0.4" /><ellipse cx="566.4" cy="864.5" rx="1.5" ry="2.4" transform="rotate(-20 566.4 864.5)" fill="#1d1d1d" stroke="#111" stroke-width="0.4" /><ellipse cx="590.5" cy="873.5" rx="4.4" ry="3.3" transform="rotate(-12 590.5 873.5)" fill="#4a4843" stroke="#111" stroke-width="0.8" /><ellipse cx="590.8" cy="874.7" rx="3" ry="1.7" transform="rotate(-12 590.8 874.7)" fill="#fff" stroke="none" stroke-width="0" /><ellipse cx="599.8" cy="878.1" rx="4.4" ry="3.3" transform="rotate(-12 599.8 878.1)" fill="#4a4843" stroke="#111" stroke-width="0.8" /><ellipse cx="600.1" cy="879.3" rx="3" ry="1.7" transform="rotate(-12 600.1 879.3)" fill="#fff" stroke="none" stroke-width="0" /><ellipse cx="608.0" cy="883.8" rx="4.4" ry="3.3" transform="rotate(-12 608.0 883.8)" fill="#4a4843" stroke="#111" stroke-width="0.8" /><ellipse cx="608.3" cy="885.0" rx="3" ry="1.7" transform="rotate(-12 608.3 885.0)" fill="#fff" stroke="none" stroke-width="0" /><ellipse cx="583.9" cy="881.2" rx="4.4" ry="3.3" transform="rotate(-12 583.9 881.2)" fill="#4a4843" stroke="#111" stroke-width="0.8" /><ellipse cx="584.2" cy="882.4" rx="3" ry="1.7" transform="rotate(-12 584.2 882.4)" fill="#fff" stroke="none" stroke-width="0" /><ellipse cx="593.1" cy="886.1" rx="4.4" ry="3.3" transform="rotate(-12 593.1 886.1)" fill="#4a4843" stroke="#111" stroke-width="0.8" /><ellipse cx="593.4" cy="887.3" rx="3" ry="1.7" transform="rotate(-12 593.4 887.3)" fill="#fff" stroke="none" stroke-width="0" /><ellipse cx="601.3" cy="891.5" rx="4.4" ry="3.3" transform="rotate(-12 601.3 891.5)" fill="#4a4843" stroke="#111" stroke-width="0.8" /><ellipse cx="601.6" cy="892.7" rx="3" ry="1.7" transform="rotate(-12 601.6 892.7)" fill="#fff" stroke="none" stroke-width="0" /><path d="M664.8 1007.9C664.3 1004.3 665.1 1001.8 666.7 998.9C668.3 996.0 671.2 992.7 674.4 990.6C677.6 988.5 681.9 987.4 686.0 986.3C690.0 985.3 695.4 984.6 698.8 984.6C702.2 984.5 703.5 984.1 706.5 985.8C709.5 987.6 712.9 991.4 716.8 995.1C720.6 998.8 725.3 1003.2 729.6 1007.9C733.9 1012.6 738.6 1018.0 742.5 1023.3C746.3 1028.7 749.7 1034.9 752.7 1040.0C755.7 1045.2 758.7 1050.7 760.4 1054.1C762.1 1057.6 763.2 1058.0 763.0 1060.6C762.8 1063.1 761.3 1066.8 759.1 1069.6C757.0 1072.3 753.4 1075.1 750.2 1077.3C747.0 1079.4 743.3 1081.1 739.9 1082.4C736.5 1083.7 732.6 1085.0 729.6 1085.0C726.6 1085.0 724.9 1084.3 721.9 1082.4C718.9 1080.5 714.8 1076.6 711.6 1073.4C708.4 1070.2 704.3 1065.9 702.6 1063.1C701.0 1060.4 703.3 1059.5 702.0 1056.7C700.7 1053.9 697.6 1050.1 694.9 1046.4C692.3 1042.8 688.3 1037.0 686.0 1034.9C683.6 1032.7 682.5 1034.5 680.8 1033.6C679.1 1032.7 677.6 1031.9 675.7 1029.8C673.8 1027.6 671.1 1024.4 669.3 1020.8C667.4 1017.1 665.2 1011.6 664.8 1007.9Z" fill="#3a3835" stroke="#111" stroke-width="1"/><clipPath id="cpb"><path d="M664.8 1007.9C664.3 1004.3 665.1 1001.8 666.7 998.9C668.3 996.0 671.2 992.7 674.4 990.6C677.6 988.5 681.9 987.4 686.0 986.3C690.0 985.3 695.4 984.6 698.8 984.6C702.2 984.5 703.5 984.1 706.5 985.8C709.5 987.6 712.9 991.4 716.8 995.1C720.6 998.8 725.3 1003.2 729.6 1007.9C733.9 1012.6 738.6 1018.0 742.5 1023.3C746.3 1028.7 749.7 1034.9 752.7 1040.0C755.7 1045.2 758.7 1050.7 760.4 1054.1C762.1 1057.6 763.2 1058.0 763.0 1060.6C762.8 1063.1 761.3 1066.8 759.1 1069.6C757.0 1072.3 753.4 1075.1 750.2 1077.3C747.0 1079.4 743.3 1081.1 739.9 1082.4C736.5 1083.7 732.6 1085.0 729.6 1085.0C726.6 1085.0 724.9 1084.3 721.9 1082.4C718.9 1080.5 714.8 1076.6 711.6 1073.4C708.4 1070.2 704.3 1065.9 702.6 1063.1C701.0 1060.4 703.3 1059.5 702.0 1056.7C700.7 1053.9 697.6 1050.1 694.9 1046.4C692.3 1042.8 688.3 1037.0 686.0 1034.9C683.6 1032.7 682.5 1034.5 680.8 1033.6C679.1 1032.7 677.6 1031.9 675.7 1029.8C673.8 1027.6 671.1 1024.4 669.3 1020.8C667.4 1017.1 665.2 1011.6 664.8 1007.9Z"/></clipPath><g clip-path="url(#cpb)"><path d="M665.2 1006.8C664.7 1003.1 665.5 1000.7 667.1 997.8C668.7 994.9 671.6 991.5 674.8 989.4C678.0 987.3 682.3 986.2 686.3 985.2C690.4 984.2 695.8 983.5 699.2 983.4C702.6 983.3 703.9 982.9 706.9 984.7C709.9 986.4 713.3 990.2 717.2 993.9C721.0 997.6 725.7 1002.1 730.0 1006.8C734.3 1011.5 739.0 1016.8 742.8 1022.2C746.7 1027.5 750.1 1033.7 753.1 1038.9C756.1 1044.0 759.1 1049.6 760.8 1053.0C762.5 1056.4 763.6 1056.8 763.4 1059.4C763.2 1062.0 761.7 1065.6 759.5 1068.4C757.4 1071.2 753.8 1074.0 750.5 1076.1C747.3 1078.2 743.7 1080.0 740.3 1081.2C736.8 1082.5 733.0 1083.8 730.0 1083.8C727.0 1083.8 725.3 1083.2 722.3 1081.2C719.3 1079.3 715.2 1075.5 712.0 1072.3C708.8 1069.0 704.6 1064.8 703.0 1062.0C701.4 1059.2 703.7 1058.3 702.4 1055.6C701.1 1052.8 698.0 1048.9 695.3 1045.3C692.7 1041.7 688.7 1035.9 686.3 1033.7C684.0 1031.6 682.9 1033.3 681.2 1032.4C679.5 1031.6 678.0 1030.7 676.1 1028.6C674.1 1026.5 671.5 1023.2 669.6 1019.6C667.8 1016.0 665.6 1010.4 665.2 1006.8Z" fill="#918c82" stroke="#111" stroke-width=".9"/></g><path d="M732.8 1020.5L738.6 1017.3" fill="none" stroke="#55524d" stroke-width="1.4" stroke-linejoin="round" /><circle cx="672.7" cy="1004.1" r="1.6" fill="#1d1d1d" stroke="none" stroke-width="0.8"/><circle cx="728.3" cy="1024.0" r="1.6" fill="#1d1d1d" stroke="none" stroke-width="0.8"/><circle cx="730.5" cy="1076.9" r="1.6" fill="#1d1d1d" stroke="none" stroke-width="0.8"/><path d="M779.7 962.3L784.8 959.1L789.3 962.3L790.6 972.0L785.5 974.3L784.2 966.8Z" fill="#44413c" stroke="#0e0e0e" stroke-width="1.05" stroke-linejoin="round" /><path d="M784.8 959.1L785.9 966.8L785.5 974.3" fill="none" stroke="#111" stroke-width="0.6" stroke-linejoin="round" /><path d="M750.8 975.2L759.8 982.9L760.4 993.2L751.4 984.8Z" fill="#534f49" stroke="#0e0e0e" stroke-width="1.05" stroke-linejoin="round" /><path d="M759.8 982.9L784.2 966.8L784.8 977.7L760.4 993.2Z" fill="#4f4c47" stroke="#0e0e0e" stroke-width="1.05" stroke-linejoin="round" /><path d="M750.8 975.2L775.2 959.8L784.2 966.8L759.8 982.9Z" fill="#69655e" stroke="#0e0e0e" stroke-width="1.05" stroke-linejoin="round" /><circle cx="755.3" cy="983.5" r="1" fill="#2a2927" stroke="none" stroke-width="0.8"/><ellipse cx="577.6" cy="1075.2" rx="13.4" ry="11" transform="rotate(-12 577.6 1075.2)" fill="#45433e" stroke="#111" stroke-width="1" /><ellipse cx="577.6" cy="1071.8" rx="13" ry="10.6" transform="rotate(-12 577.6 1071.8)" fill="#8a867c" stroke="#111" stroke-width="1" /><path d="M570.2 1064.1L575.4 1070.2L569.3 1078.3" fill="none" stroke="#1a1a1a" stroke-width="1.3" stroke-linejoin="round" /><path d="M577.3 1062.2L579.2 1068.8L586.7 1065.1" fill="none" stroke="#1a1a1a" stroke-width="1.3" stroke-linejoin="round" /><path d="M572.6 1079.2L577.3 1073.5L581.1 1080.1" fill="none" stroke="#1a1a1a" stroke-width="1.3" stroke-linejoin="round" /><path d="M589.1 1068.8L581.1 1071.2L584.8 1077.3" fill="none" stroke="#1a1a1a" stroke-width="1.3" stroke-linejoin="round" /><circle cx="577.0" cy="1070.7" r="1.3" fill="#8a867c" stroke="#111" stroke-width="0.7"/><path d="M609.3 1117.3V1121.9A4.7 4 0 0 0 618.7 1121.9V1117.3Z" fill="#45433e" stroke="#111" stroke-width=".9"/><ellipse cx="614.0" cy="1117.3" rx="4.7" ry="3.9" transform="rotate(-8 614.0 1117.3)" fill="#8a867c" stroke="#111" stroke-width="0.9" /><path d="M619.2 1122.5V1127.1A4.7 4 0 0 0 628.6 1127.1V1122.5Z" fill="#45433e" stroke="#111" stroke-width=".9"/><ellipse cx="623.9" cy="1122.5" rx="4.7" ry="3.9" transform="rotate(-8 623.9 1122.5)" fill="#8a867c" stroke="#111" stroke-width="0.9" /><path d="M628.6 1128.6V1133.2A4.7 4 0 0 0 638.0 1133.2V1128.6Z" fill="#45433e" stroke="#111" stroke-width=".9"/><ellipse cx="633.3" cy="1128.6" rx="4.7" ry="3.9" transform="rotate(-8 633.3 1128.6)" fill="#8a867c" stroke="#111" stroke-width="0.9" /><path d="M590.0 1133.3V1137.9A4.7 4 0 0 0 599.4 1137.9V1133.3Z" fill="#45433e" stroke="#111" stroke-width=".9"/><ellipse cx="594.7" cy="1133.3" rx="4.7" ry="3.9" transform="rotate(-8 594.7 1133.3)" fill="#8a867c" stroke="#111" stroke-width="0.9" /><path d="M600.4 1138.5V1143.1A4.7 4 0 0 0 609.8 1143.1V1138.5Z" fill="#45433e" stroke="#111" stroke-width=".9"/><ellipse cx="605.1" cy="1138.5" rx="4.7" ry="3.9" transform="rotate(-8 605.1 1138.5)" fill="#8a867c" stroke="#111" stroke-width="0.9" /><path d="M609.8 1145.1V1149.7A4.7 4 0 0 0 619.2 1149.7V1145.1Z" fill="#45433e" stroke="#111" stroke-width=".9"/><ellipse cx="614.5" cy="1145.1" rx="4.7" ry="3.9" transform="rotate(-8 614.5 1145.1)" fill="#8a867c" stroke="#111" stroke-width="0.9" /><ellipse cx="570.2" cy="1107.4" rx="2.6" ry="4.6" transform="rotate(-25 570.2 1107.4)" fill="#3f3d39" stroke="#111" stroke-width="0.9" /><ellipse cx="577.1" cy="1117.1" rx="2.6" ry="4.8" transform="rotate(-25 577.1 1117.1)" fill="#3f3d39" stroke="#111" stroke-width="0.9" /><ellipse cx="595.9" cy="1101.3" rx="2.6" ry="4" transform="rotate(-25 595.9 1101.3)" fill="#3f3d39" stroke="#111" stroke-width="0.9" /><ellipse cx="604.2" cy="1096.4" rx="2.6" ry="4.2" transform="rotate(-25 604.2 1096.4)" fill="#3f3d39" stroke="#111" stroke-width="0.9" /><path d="M1829.8 182.9L1868.8 163.9L1900.2 190.6L1858.6 213.7Z" fill="#e9e9eb" stroke="none" stroke-width="0" stroke-linejoin="round" opacity=".88"/><path d="M1829.8 182.9L1858.6 213.7L1860.1 243.5L1833.9 214.7Z" fill="#e2e2e5" stroke="none" stroke-width="0" stroke-linejoin="round" opacity=".88"/><path d="M1858.6 213.7L1900.2 190.6L1896.1 220.9L1860.1 243.5Z" fill="#d9d9dc" stroke="none" stroke-width="0" stroke-linejoin="round" opacity=".88"/><path d="M1829.8 182.9L1868.8 163.9L1900.2 190.6L1858.6 213.7L1829.8 182.9" fill="none" stroke="#5a5a5a" stroke-width="0.7" stroke-linejoin="round" stroke-dasharray="3 2"/><path d="M1858.6 213.7L1860.1 243.5L1896.1 220.9L1900.2 190.6" fill="none" stroke="#5a5a5a" stroke-width="0.7" stroke-linejoin="round" stroke-dasharray="3 2"/><path d="M1833.9 214.7L1860.1 243.5" fill="none" stroke="#f29a9a" stroke-width="1.6" stroke-linejoin="round" /><path d="M1860.1 243.5L1865.8 251.2" fill="none" stroke="#f08a8a" stroke-width="1.4" stroke-linejoin="round" /><path d="M1827.9 177.5L1833.9 214.7" fill="none" stroke="#5252f2" stroke-width="2.2" stroke-linejoin="round" /><text transform="matrix(28.77 30.82 -39.04 19.01 1868.8 163.9)" x="0.19" y="0.74" font-size="0.62" font-family="'Liberation Sans','Noto Sans CJK JP',sans-serif" fill="#8b909a">上</text><text transform="matrix(28.77 30.82 4.11 31.85 1829.8 182.9)" x="0.2" y="0.72" font-size="0.6" font-family="'Liberation Sans','Noto Sans CJK JP',sans-serif" fill="#8b909a">前</text><text transform="matrix(41.61 -23.12 1.54 29.80 1858.6 213.7)" x="0.2" y="0.74" font-size="0.6" font-family="'Liberation Sans','Noto Sans CJK JP',sans-serif" fill="#8b909a">右</text><text x="1822.8" y="175.2" font-size="11.5" font-family="'Liberation Sans',sans-serif" fill="#6a6af5">Z</text><text x="1864.5" y="261.0" font-size="11.5" font-family="'Liberation Sans',sans-serif" fill="#f27878">X</text></g>
</svg>
<div id="title">
<svg class="abs" style="left:4px;top:3px" width="14" height="17" viewBox="0 0 14 17" ><rect x="0.5" y="0" width="13" height="16.5" rx="2.5" fill="#f4722b"/><rect x="0.5" y="11.5" width="13" height="5" rx="1.5" fill="#b8410f"/><path d="M4.5 9.5V2.5H10M4.5 6H9" stroke="#fff" stroke-width="1.7" fill="none"/><rect x="3.5" y="13" width="7" height="1.6" fill="#f7b08b"/></svg>
<div class="t" style="left:23px;top:5.5px;font-size:12px;color:#000"><span class="k" style="width:238.6px;transform:scaleX(.9642)">PC-FX_open2 v1 (g catsin) - Autodesk Fusion </span>個人用<span class="k" style="width:3.68px;transform:scaleX(0.920)">(</span>商用利用不可<span class="k" style="width:3.68px;transform:scaleX(0.920)">)</span></div>
<svg class="abs" style="left:1794px;top:0px" width="130" height="23" viewBox="0 0 130 23" ><path d="M5 10.5H15.5" stroke="#111" stroke-width="1.1"/><path d="M50.5 7.5H58.5V15.5H50.5ZM52.5 7.5V5.5H60.5V13.5H58.5" stroke="#111" stroke-width="1.1" fill="none"/><path d="M96 5L106 15M106 5L96 15" stroke="#111" stroke-width="1.1"/></svg>
</div>
<div id="tabbar">
<svg class="abs" style="left:9px;top:8px" width="15" height="15" viewBox="0 0 15 15" ><rect x="0" y="0" width="4" height="4" rx=".7" fill="#585858"/><rect x="0" y="5" width="4" height="4" rx=".7" fill="#585858"/><rect x="0" y="10" width="4" height="4" rx=".7" fill="#585858"/><rect x="5" y="0" width="4" height="4" rx=".7" fill="#585858"/><rect x="5" y="5" width="4" height="4" rx=".7" fill="#585858"/><rect x="5" y="10" width="4" height="4" rx=".7" fill="#585858"/><rect x="10" y="0" width="4" height="4" rx=".7" fill="#585858"/><rect x="10" y="5" width="4" height="4" rx=".7" fill="#585858"/><rect x="10" y="10" width="4" height="4" rx=".7" fill="#585858"/></svg>
<svg class="abs" style="left:42px;top:8px" width="14" height="16" viewBox="0 0 14 16" ><path d="M0.5 0.5H8L13 5.5V15.5H0.5Z" fill="#585858"/><path d="M8.3 0.3V5.3H13.3" fill="#ccc" stroke="#ccc" stroke-width=".6"/></svg>
<svg class="abs" style="left:60px;top:13px" width="9" height="6" viewBox="0 0 9 6" ><path d="M0.5 0.5H8L4.25 5Z" fill="#585858"/></svg>
<svg class="abs" style="left:87px;top:8px" width="14" height="15" viewBox="0 0 14 15" ><path d="M0.5 1.5Q0.5 0.5 1.5 0.5H11L13.5 3V13.5Q13.5 14.5 12.5 14.5H1.5Q0.5 14.5 0.5 13.5Z" fill="#8e8e8e"/><rect x="3.2" y="1.2" width="7" height="4.6" fill="#ccc"/><rect x="3.2" y="9" width="7.6" height="5.5" fill="#ccc"/><rect x="4.6" y="10.6" width="4.8" height="3.9" fill="#8e8e8e"/></svg>
<svg class="abs" style="left:119px;top:8px" width="16" height="15" viewBox="0 0 16 15" ><path d="M5.5 1L1 5.5L5.5 10M1.5 5.5H9C12.5 5.5 14 8 13.5 10.5C13.2 12 12.5 13 11.5 14" fill="none" stroke="#585858" stroke-width="2.2"/></svg>
<svg class="abs" style="left:140px;top:13px" width="9" height="6" viewBox="0 0 9 6" ><path d="M0.5 0.5H8L4.25 5Z" fill="#585858"/></svg>
<svg class="abs" style="left:158px;top:8px" width="16" height="15" viewBox="0 0 16 15" ><path d="M10.5 1L15 5.5L10.5 10M14.5 5.5H7C3.5 5.5 2 8 2.5 10.5C2.8 12 3.5 13 4.5 14" fill="none" stroke="#8e8e8e" stroke-width="1.8"/></svg>
<svg class="abs" style="left:179px;top:13px" width="9" height="6" viewBox="0 0 9 6" ><path d="M0.5 0.5H8L4.25 5Z" fill="#8e8e8e"/></svg>
<div class="tab1"></div><div class="tab2"></div><div class="tab3"></div>
<svg class="abs" style="left:497px;top:11px" width="16" height="14" viewBox="0 0 16 14" ><path d="M1.5 7.5L5.5 11.5L14 2" fill="none" stroke="#444" stroke-width="2.2"/></svg>
<div class="t" style="left:516px;top:12.5px;font-size:11.9px;color:#2b2b2b">PC-FX_open2 v1</div>
<svg class="abs" style="left:905px;top:13px" width="11" height="11" viewBox="0 0 11 11" ><path d="M1.5 1.5L9.5 9.5M9.5 1.5L1.5 9.5" stroke="#333" stroke-width="1.3"/></svg>
<svg class="abs" style="left:1222px;top:11px" width="13" height="15" viewBox="0 0 13 15" ><path d="M3.2 6.5V4.2A3.3 3.3 0 0 1 9.8 4.2V6.5" fill="none" stroke="#6b6b6b" stroke-width="1.5"/><rect x="0.8" y="6.2" width="11.4" height="8.3" rx="1" fill="#6b6b6b"/><path d="M2.5 9H10.5M2.5 11.5H10.5" stroke="#b9b9b9" stroke-width=".8"/></svg>
<div class="t" style="left:1241px;top:12.5px;font-size:12.2px;color:#555">fm-towns-marty v52</div>
<svg class="abs" style="left:1637px;top:13px" width="11" height="11" viewBox="0 0 11 11" ><path d="M1.5 1.5L9.5 9.5M9.5 1.5L1.5 9.5" stroke="#777" stroke-width="1.3"/></svg>
<svg class="abs" style="left:1665px;top:10px" width="15" height="15" viewBox="0 0 15 15" ><path d="M7.5 1V14M1 7.5H14" stroke="#555" stroke-width="2.4"/></svg>
<svg class="abs" style="left:1697px;top:7px" width="18" height="18" viewBox="0 0 18 18" ><circle cx="9" cy="9" r="8.2" fill="#1a86e0"/><path d="M9 3.2L13 8.2H10.6C10.8 11 10 13 7.6 14.5C8.6 12.6 8.4 10.5 8 8.2H5.5Z" fill="#fff"/></svg>
<svg class="abs" style="left:1730px;top:7px" width="18" height="18" viewBox="0 0 18 18" ><circle cx="9" cy="9" r="6.5" fill="none" stroke="#5a5a5a" stroke-width="2.3" stroke-dasharray="35 5.8" transform="rotate(148 9 9)"/><g transform="translate(9.2 9) rotate(38)" fill="#5a5a5a"><rect x="-3.1" y="-1.8" width="6.2" height="4.6" rx="1.6"/><rect x="-2.3" y="-5.2" width="1.3" height="4"/><rect x="1" y="-5.2" width="1.3" height="4"/><rect x="-.8" y="2.5" width="1.6" height="3.6"/></g></svg>
<svg class="abs" style="left:1762.7px;top:7px" width="18" height="18" viewBox="0 0 18 18" ><circle cx="9" cy="9" r="8" fill="none" stroke="#555" stroke-width="1"/><circle cx="9" cy="9" r="6.3" fill="#555"/><path d="M9 4.8V9.3H12.5" fill="none" stroke="#ccc" stroke-width="1.4"/></svg>
<div class="t" style="left:1783px;top:11px;font-size:11.5px;color:#5a2a3a">1</div>
<svg class="abs" style="left:1811px;top:6px" width="20" height="20" viewBox="0 0 20 20" ><path d="M9 3C5.5 3.5 4.8 6.5 4.8 9.5C4.8 12 3.8 13 2.8 14.2H15.2C14.2 13 13.2 12 13.2 9.5C13.2 6.5 12.5 3.5 9 3Z" fill="#555"/><rect x="8" y="1.5" width="2" height="2.5" rx="1" fill="#555"/><path d="M7 15.3A2 2 0 0 0 11 15.3Z" fill="#555"/><circle cx="13.8" cy="4.8" r="2.7" fill="#1f9ae0"/></svg>
<svg class="abs" style="left:1845px;top:7px" width="18" height="18" viewBox="0 0 18 18" ><circle cx="9" cy="9" r="8.2" fill="#555"/><path d="M6.2 6.8C6.2 3.2 12 3.2 12 6.6C12 8.8 9.2 8.6 9.2 11" fill="none" stroke="#ccc" stroke-width="2"/><circle cx="9.2" cy="13.6" r="1.2" fill="#ccc"/></svg>
<svg class="abs" style="left:1883px;top:5px" width="24" height="24" viewBox="0 0 24 24" ><defs><radialGradient id="av" cx=".4" cy=".35" r=".8"><stop offset="0" stop-color="#b9c6d8"/><stop offset="1" stop-color="#7f8fa6"/></radialGradient><clipPath id="avc"><circle cx="12" cy="12" r="11.8"/></clipPath></defs><circle cx="12" cy="12" r="11.8" fill="url(#av)"/><g clip-path="url(#avc)" fill="#525c6e"><ellipse cx="12.5" cy="9" rx="4.6" ry="5.6"/><path d="M3 24C3 17.5 7 16 10 15.2H15C18 16 22 17.5 22 24Z"/></g></svg>
</div>
<div id="toolbar">
<div class="abs" style="left:12px;top:11px;width:110px;height:61px;border:1px solid #d9d9d9;border-radius:5px;background:#f4f4f4"></div>
<div class="t" style="left:45px;top:36px;font-size:11px;font-weight:bold;color:#333"><span class="k" style="width:36.96px;transform:scaleX(0.840)">デザイン</span></div>
<svg class="abs" style="left:85px;top:39px" width="8" height="5" viewBox="0 0 8 5" ><path d="M0.5 0.5H7L3.75 4.3Z" fill="#333"/></svg>
<div class="t" style="left:150px;top:7.5px;font-size:11px;color:#0696d7"><span class="k" style="width:31.46px;transform:scaleX(0.715)">ソリッド</span></div>
<div class="t" style="left:228px;top:7.5px;font-size:11px;color:#3a3a3a"><span class="k" style="width:39.32px;transform:scaleX(0.715)">サーフェス</span></div>
<div class="t" style="left:311px;top:7.5px;font-size:11px;color:#3a3a3a"><span class="k" style="width:31.46px;transform:scaleX(0.715)">メッシュ</span></div>
<div class="t" style="left:389px;top:7.5px;font-size:11px;color:#3a3a3a"><span class="k" style="width:31.46px;transform:scaleX(0.715)">フォーム</span></div>
<div class="t" style="left:467px;top:7.5px;font-size:11px;color:#3a3a3a"><span class="k" style="width:23.59px;transform:scaleX(0.715)">シート</span><span class="k" style="width:3.21px;transform:scaleX(1.050)"> </span><span class="k" style="width:23.59px;transform:scaleX(0.715)">メタル</span></div>
<div class="t" style="left:565px;top:7.5px;font-size:11px;color:#3a3a3a"><span class="k" style="width:47.19px;transform:scaleX(0.715)">プラスチック</span></div>
<div class="t" style="left:658px;top:7.5px;font-size:11px;color:#3a3a3a"><span class="k" style="width:55.05px;transform:scaleX(0.715)">ユーティリティ</span></div>
<div class="abs" style="left:139px;top:21px;width:56px;height:2.5px;background:#0696d7;border-radius:1px"></div>
<svg class="abs" style="left:138px;top:27px" width="32" height="32" viewBox="0 0 32 32" ><g fill="none" stroke="#555" stroke-width="1"><path d="M1.5 2.5H28.5V28.5H1.5Z" stroke-dasharray="26 0"/><path d="M8.5 8.5H22.5C22.5 17 17 22.5 8.5 22.5Z" stroke="#555"/></g><rect x="0" y="1" width="3" height="3" fill="#555"/><rect x="27" y="1" width="3" height="3" fill="#555"/><rect x="0" y="27" width="3" height="3" fill="#555"/><rect x="7" y="7" width="3" height="3" fill="#555"/><rect x="21" y="7" width="3" height="3" fill="#555"/><rect x="7" y="21" width="3" height="3" fill="#555"/><path d="M18 25.5H31M24.5 19V32" stroke="#1f9a3c" stroke-width="3.2" fill="none"/></svg>
<svg class="abs" style="left:181px;top:27px" width="32" height="32" viewBox="0 0 32 32" ><path d="M0.5 26.5H18.5L24 21V26L18.5 31.5H0.5Z" fill="#dcdcdc" stroke="#b0b0b0" stroke-width=".6"/><path d="M0.5 7.5L6 1.5H24L18.5 7.5Z" fill="#8fc9f5"/><path d="M18.5 7.5L24 1.5V21L18.5 26.5Z" fill="#4a93cf"/><rect x="0.5" y="7.5" width="18" height="19" fill="#6cb0e6"/><path d="M27.5 26V3M25 6.5L27.5 1.5L30 6.5Z" stroke="#333" stroke-width="1" fill="#333"/></svg>
<svg class="abs" style="left:223px;top:27px" width="32" height="32" viewBox="0 0 32 32" ><path d="M1 16C8 8 22 8 31 15V24C22 18 10 19 7 27L1 23Z" fill="#6cb0e6"/><path d="M1 16C8 8 22 8 31 15L25.5 19.5C19 15 10 16 6.5 21Z" fill="#8fc9f5"/><path d="M6.5 21L7 27L1 23V16Z" fill="#4a93cf"/><path d="M25.5 19.5L31 15V24L25.5 28Z" fill="#fff" stroke="#444" stroke-width="1"/><path d="M3 6.5C11 1 22 1.5 29.5 7" fill="none" stroke="#333" stroke-width="1"/><path d="M1 8L6.5 3.5L7 8.5Z" fill="#333"/></svg>
<svg class="abs" style="left:266px;top:27px" width="32" height="32" viewBox="0 0 32 32" ><path d="M1.5 7.5L7.5 1.5H31V24.5L25 30.5H1.5Z" fill="#bdbdbd" stroke="#555" stroke-width="1"/><path d="M1.5 7.5L7.5 1.5H31L25 7.5Z" fill="#ececec" stroke="#777" stroke-width=".6"/><rect x="1.5" y="7.5" width="23.5" height="23" fill="#dcdcdc" stroke="#555" stroke-width="1"/><circle cx="13.5" cy="19" r="8" fill="#f4f4f4" stroke="#444" stroke-width="1"/><circle cx="13.5" cy="19" r="6.3" fill="#6cb0e6"/><path d="M11 13.5A6.3 6.3 0 0 1 19.6 20.5A5 5 0 0 1 11 13.5Z" fill="#eaf4fc"/></svg>
<svg class="abs" style="left:309px;top:27px" width="32" height="32" viewBox="0 0 32 32" ><path d="M3.5 4.5H24M3.5 4.5V25.5M3.5 25.5H24" stroke="#444" stroke-width="1" fill="none"/><rect x="0.5" y="1.5" width="6" height="6" fill="#fff" stroke="#444"/><rect x="21" y="1" width="7" height="7" fill="#6cb0e6"/><rect x="0" y="22" width="7" height="7" fill="#6cb0e6"/><rect x="21" y="22" width="7" height="7" fill="#6cb0e6"/></svg>
<svg class="abs" style="left:363px;top:27px" width="32" height="32" viewBox="0 0 32 32" ><path d="M1.5 7L6 1.5H10V26L5.5 31.5H1.5Z" fill="#dcdcdc" stroke="#555" stroke-width="1"/><path d="M8 7L13 1.5H22V26L17 31.5H8Z" fill="#4a93cf"/><path d="M8 7L13 1.5H22L17 7Z" fill="#8fc9f5"/><rect x="8" y="7" width="9" height="24.5" fill="#6cb0e6"/><path d="M19 16.5H27" stroke="#222" stroke-width="1.2"/><path d="M26 13.5L30.5 16.5L26 19.5Z" fill="#222"/></svg>
<svg class="abs" style="left:406px;top:27px" width="32" height="32" viewBox="0 0 32 32" ><path d="M1.5 8L8 1.5H14C24 2 31 8 31.5 17V25L25 31.5H1.5Z" fill="#dcdcdc" stroke="#555" stroke-width="1"/><path d="M25 31.5L31.5 25V17L25 22Z" fill="#bdbdbd"/><path d="M14 1.5C24 2 31 8 31.5 17L25 22C24 14 19 9 11 8.5Z" fill="#6cb0e6"/></svg>
<svg class="abs" style="left:449px;top:27px" width="32" height="32" viewBox="0 0 32 32" ><path d="M1.5 8L8 1.5H31.5V25L25 31.5H1.5Z" fill="#bdbdbd" stroke="#555" stroke-width="1"/><path d="M1.5 8L8 1.5H31.5L25 8Z" fill="#f2f2f2" stroke="#777" stroke-width=".6"/><rect x="1.5" y="8" width="23.5" height="23.5" fill="#dcdcdc" stroke="#555" stroke-width="1"/><rect x="5" y="12" width="16.5" height="16.5" fill="#f4f4f4"/><path d="M5 12H12V22H21.5V28.5H5Z" fill="#4a93cf"/><path d="M5 28.5L12 22H21.5V28.5Z" fill="#8fc9f5"/></svg>
<svg class="abs" style="left:492px;top:27px" width="32" height="32" viewBox="0 0 32 32" ><path d="M11 7L16 1.5H32V18L27 23.5H11Z" fill="#4a93cf"/><path d="M11 7L16 1.5H32L27 7Z" fill="#8fc9f5"/><rect x="11" y="7" width="16" height="16.5" fill="#6cb0e6"/><path d="M0.5 16L5.5 10.5H21V26L16 31.5H0.5Z" fill="#4a93cf"/><path d="M0.5 16L5.5 10.5H21L16 16Z" fill="#8fc9f5"/><rect x="0.5" y="16" width="15.5" height="15.5" fill="#6cb0e6"/></svg>
<svg class="abs" style="left:535px;top:27px" width="32" height="32" viewBox="0 0 32 32" ><path d="M2.5 20H25L29 16V27L25 31H2.5Z" fill="#dcdcdc" stroke="#777" stroke-width=".8"/><path d="M25 20L29 16V27L25 31Z" fill="#bdbdbd"/><path d="M2.5 6.5L7.5 1.5H30V12L25 16.5H2.5Z" fill="#4a93cf"/><path d="M2.5 6.5L7.5 1.5H30L25 6.5Z" fill="#8fc9f5"/><rect x="2.5" y="6.5" width="22.5" height="10" fill="#6cb0e6"/><path d="M0.5 19H24L32 11.5" fill="none" stroke="#1e8fe0" stroke-width="1.2"/></svg>
<svg class="abs" style="left:578px;top:27px" width="32" height="32" viewBox="0 0 32 32" ><path d="M16 5V27M5 16H27" stroke="#333" stroke-width="2.2"/><path d="M16 0.5L21 7.5H11Z M16 31.5L21 24.5H11Z M0.5 16L7.5 11V21Z M31.5 16L24.5 11V21Z" fill="#333"/></svg>
<svg class="abs" style="left:632px;top:27px" width="32" height="32" viewBox="0 0 32 32" ><path d="M1.5 18.5H13.5V31H1.5Z M13.5 18.5H25V31H13.5Z" fill="#dcdcdc" stroke="#777" stroke-width=".8"/><path d="M13.5 18.5L17 15H28.5L25 18.5Z" fill="#efefef" stroke="#888" stroke-width=".6"/><path d="M25 18.5L28.5 15V27.5L25 31Z" fill="#bdbdbd" stroke="#888" stroke-width=".6"/><path d="M1.5 9L6 4.5H17V14L13.5 18.5H1.5Z" fill="#4a93cf"/><path d="M1.5 9L6 4.5H17L13.5 9Z" fill="#8fc9f5"/><rect x="1.5" y="9" width="12" height="9.5" fill="#6cb0e6"/><path d="M24 0.5L25.6 5.2L29.5 2.5L28 7L32.5 8L28 9.8L30.5 14L26 12L24 16L22.5 12L18 14L20.5 9.8L16 8L20.5 7L18.8 2.5L22.6 5.2Z" fill="#f5a11a"/></svg>
<svg class="abs" style="left:675px;top:27px" width="32" height="32" viewBox="0 0 32 32" ><path d="M2.5 10C2.5 4 6 2.5 9 2.5H13V11L9.5 13V26L3 31Z" fill="#dcdcdc" stroke="#666" stroke-width="1"/><path d="M8.5 3.5H12.5V10.5H8.5Z" fill="#f6f6f6" stroke="#777" stroke-width=".7"/><path d="M22 6L28.5 12V30L22 24Z" fill="#dcdcdc" stroke="#666" stroke-width="1"/><path d="M17.5 12.5H22V22.5H17.5Z" fill="#bdbdbd" stroke="#666" stroke-width=".9"/><path d="M10.5 15V21M19.5 6V11" stroke="#1e8fe0" stroke-width="1.2"/></svg>
<svg class="abs" style="left:743px;top:27px" width="32" height="32" viewBox="0 0 28.5 28.5" ><g opacity=".45"><path d="M1.5 9L7 3.5H24V23.5H1.5Z" fill="#ebebeb" stroke="#cfcfcf"/><circle cx="20" cy="8.5" r="6.5" fill="#9fcdf2"/><path d="M20 4.5L23 8.5H21V12H19V8.5H17Z" fill="#fff"/><path d="M15 19H26M15 25H26M19 16.5V21.5M23 22.5V27.5" stroke="#b9c8d6" stroke-width="1.4" fill="none"/></g></svg>
<svg class="abs" style="left:786px;top:27px" width="32" height="32" viewBox="0 0 28.5 28.5" ><g opacity=".45"><rect x="1.5" y="2.5" width="22" height="21" fill="#ececec" stroke="#cfcfcf"/><path d="M1.5 6.5H23.5M1.5 12H23.5M1.5 17.5H23.5M7 6.5V23.5M12.5 6.5V23.5M18 6.5V23.5" stroke="#cfcfcf" stroke-width="1"/><circle cx="20.5" cy="8.5" r="6.5" fill="#9fcdf2"/><path d="M20.5 4.5L23.5 8.5H21.5V12H19.5V8.5H17.5Z" fill="#fff"/><path d="M15.5 19H26.5M15.5 25H26.5M19.5 16.5V21.5M23.5 22.5V27.5" stroke="#b9c8d6" stroke-width="1.4" fill="none"/></g></svg>
<svg class="abs" style="left:855px;top:27px" width="32" height="32" viewBox="0 0 32 32" ><path d="M1.5 9.5L7 2.5H11V24.5L5.5 31.5H1.5Z" fill="#dcdcdc" stroke="#555" stroke-width="1"/><path d="M8.5 9L17.5 2V24L8.5 31.5Z" fill="#56c27d"/><path d="M21 9.5L29.5 2.5V24L21 31.5Z" fill="#e2905d"/></svg>
<svg class="abs" style="left:913px;top:27px" width="32" height="32" viewBox="0 0 32 32" ><rect x="2" y="16" width="28" height="7.5" fill="#f3a712"/><path d="M5 16V19M8.5 16V18M12 16V19M15.5 16V18M19 16V19M22.5 16V18M26 16V19" stroke="#8a5a00" stroke-width=".8"/><path d="M2.5 6.5V14.5M29.5 6.5V14.5M4 10.5H28" stroke="#555" stroke-width="1" fill="none"/><path d="M3.5 10.5L7.5 8.3V12.7Z M28.5 10.5L24.5 8.3V12.7Z" fill="#555"/></svg>
<svg class="abs" style="left:972px;top:27px" width="32" height="32" viewBox="0 0 32 32" ><path d="M5.5 9.5L10 5.5H30V25L26 29.5H5.5Z" fill="#dcdcdc" stroke="#666" stroke-width=".9"/><path d="M26 9.5L30 5.5V25L26 29.5Z" fill="#bdbdbd"/><path d="M5.5 9.5H26V29.5" fill="none" stroke="#888" stroke-width=".6"/><path d="M1 8H10" stroke="#1e7fd6" stroke-width="4"/><path d="M9 2.5L18 8L9 13.5Z" fill="#1e7fd6"/><g fill="none" stroke="#2b2b2b" stroke-width="2"><rect x="16.5" y="25" width="9" height="5.5" rx="2.7" transform="rotate(-35 21 27.5)"/><rect x="22" y="20.5" width="9" height="5.5" rx="2.7" transform="rotate(-35 26.5 23.5)"/></g></svg>
<svg class="abs" style="left:1014.5px;top:27px" width="32" height="32" viewBox="0 0 32 32" ><rect x="0.5" y="0.5" width="29" height="29" fill="#7cc0f5" stroke="#4f9ad6"/><path d="M1 18C5 11 9 10 13 16C15 19 17 21 20 21C23 21 25 16 29 20V29H1Z" fill="#3f8fd0"/><circle cx="22" cy="8.5" r="3.2" fill="#fbf3b0"/></svg>
<svg class="abs" style="left:1067px;top:24px" width="38" height="38" viewBox="0 0 38 38" ><rect x="0" y="0" width="38" height="38" fill="#1192d6"/><rect x="3.5" y="3.5" width="27" height="21" fill="none" stroke="#8fe36a" stroke-width="1.2" stroke-dasharray="4 2.5"/><path d="M24 17V35L28.2 31L31 37L33.6 35.8L30.8 30L36 29.5Z" fill="#fff"/></svg>
<div class="sep" style="left:351px"></div>
<div class="sep" style="left:620px"></div>
<div class="sep" style="left:717px"></div>
<div class="sep" style="left:841px"></div>
<div class="sep" style="left:900px"></div>
<div class="sep" style="left:959px"></div>
<div class="sep" style="left:1056px"></div>
<div class="glbl" style="left:221px;top:65.5px">作成<svg width="7" height="5" viewBox="0 0 7 5" style="margin-left:2px;vertical-align:2px"><path d="M0.3 0.3H6.7L3.5 4.6Z" fill="#333"/></svg></div>
<div class="glbl" style="left:468px;top:65.5px">修正<svg width="7" height="5" viewBox="0 0 7 5" style="margin-left:2px;vertical-align:2px"><path d="M0.3 0.3H6.7L3.5 4.6Z" fill="#333"/></svg></div>
<div class="glbl" style="left:642px;top:65.5px"><span class="k" style="width:39.05px;transform:scaleX(0.710)">アセンブリ</span><svg width="7" height="5" viewBox="0 0 7 5" style="margin-left:2px;vertical-align:2px"><path d="M0.3 0.3H6.7L3.5 4.6Z" fill="#333"/></svg></div>
<div class="glbl" style="left:731px;top:65.5px"><span class="k" style="width:85.91px;transform:scaleX(0.710)">コンフィギュレーション</span><svg width="7" height="5" viewBox="0 0 7 5" style="margin-left:2px;vertical-align:2px"><path d="M0.3 0.3H6.7L3.5 4.6Z" fill="#333"/></svg></div>
<div class="glbl" style="left:856px;top:65.5px">構築<svg width="7" height="5" viewBox="0 0 7 5" style="margin-left:2px;vertical-align:2px"><path d="M0.3 0.3H6.7L3.5 4.6Z" fill="#333"/></svg></div>
<div class="glbl" style="left:914px;top:65.5px">検査<svg width="7" height="5" viewBox="0 0 7 5" style="margin-left:2px;vertical-align:2px"><path d="M0.3 0.3H6.7L3.5 4.6Z" fill="#333"/></svg></div>
<div class="glbl" style="left:990px;top:65.5px">挿入<svg width="7" height="5" viewBox="0 0 7 5" style="margin-left:2px;vertical-align:2px"><path d="M0.3 0.3H6.7L3.5 4.6Z" fill="#333"/></svg></div>
<div class="glbl" style="left:1070px;top:65.5px">選択<svg width="7" height="5" viewBox="0 0 7 5" style="margin-left:2px;vertical-align:2px"><path d="M0.3 0.3H6.7L3.5 4.6Z" fill="#333"/></svg></div>
</div>
<div class="hdr" style="top:144px"></div>
<svg class="abs" style="left:17px;top:153px" width="11" height="8" viewBox="0 0 11 8" ><path d="M5 0.5V7.5L0.5 4Z M10.5 0.5V7.5L6 4Z" fill="#333"/></svg>
<div class="t" style="left:37px;top:152px;font-size:11px;color:#444"><span class="k" style="width:33.00px;transform:scaleX(0.750)">ブラウザ</span></div>
<svg class="abs" style="left:290px;top:151px" width="11" height="11" viewBox="0 0 11 11" ><circle cx="5.5" cy="5.5" r="4.8" fill="#222"/><rect x="2.8" y="4.8" width="5.4" height="1.4" fill="#fff"/></svg>
<div class="abs" style="left:16px;top:173px;width:6px;height:936px;background:rgba(190,190,190,.85)"></div>
<div class="abs" style="left:16.5px;top:187px;width:5px;height:32px;background:#aaa;border:1px solid #8f8f8f;border-radius:3px"></div>
<div class="row" style="left:84px;top:174.5px;width:130px"></div>
<svg class="abs" style="left:65px;top:177px" width="12" height="14" viewBox="0 0 12 14" ><path d="M2 1.2V12.8L10.3 7Z" fill="#e4e4ea" stroke="#1a1a1a" stroke-width="1.3" stroke-linejoin="round"/></svg>
<svg class="abs" style="left:87px;top:177.5px" width="16" height="13" viewBox="0 0 16 13" ><path d="M0.8 6.5C3 3 6 2 8 2C10 2 13 3 15.2 6.5C13 10 10 11 8 11C6 11 3 10 0.8 6.5Z" fill="none" stroke="#9a9a9a" stroke-width=".9"/><circle cx="8" cy="6.5" r="2.6" fill="none" stroke="#9a9a9a" stroke-width=".9"/><path d="M2.5 1L13.5 12" stroke="#9a9a9a" stroke-width="1"/><path d="M3.6 0.4L14.6 11.4" stroke="#f1f1f1" stroke-width=".8"/></svg>
<svg class="abs" style="left:112px;top:177px" width="16" height="14" viewBox="0 0 16 14" ><path d="M0.5 1.5H6.5L7.5 3.5H15.5V12.5H0.5Z" fill="#9e9e9e"/><path d="M0.5 3.2H7" stroke="#f1f1f1" stroke-width=".7"/></svg>
<div class="lbl" style="left:142px;top:177px"><span class="k" style="width:31.24px;transform:scaleX(0.710)">グループ</span><span class="k" style="width:30.17px;transform:scaleX(1.050)">4 (22)</span></div>
<div class="row" style="left:84px;top:198.5px;width:118px"></div>
<svg class="abs" style="left:87px;top:202.5px" width="16" height="11" viewBox="0 0 16 11" ><path d="M0.5 5.5C3 1.5 6 0.5 8 0.5C10 0.5 13 1.5 15.5 5.5C13 9.5 10 10.5 8 10.5C6 10.5 3 9.5 0.5 5.5Z" fill="#9a9a9a"/><circle cx="8" cy="5.5" r="3.4" fill="#f1f1f1"/><circle cx="8" cy="5.5" r="2.1" fill="#9a9a9a"/></svg>
<svg class="abs" style="left:112px;top:200px" width="16" height="16" viewBox="0 0 16 16" ><defs><linearGradient id="bg" x1="0" x2="1"><stop offset="0" stop-color="#c9cdd3"/><stop offset=".55" stop-color="#f4f5f7"/><stop offset="1" stop-color="#fff"/></linearGradient></defs><path d="M1 3.5C1 1.8 3 0.8 8 0.8C13 0.8 15 1.8 15 3.5V12.5C15 14.2 13 15.2 8 15.2C3 15.2 1 14.2 1 12.5Z" fill="#fff" stroke="#30343c" stroke-width="1.25"/><path d="M3.2 5.4C5 6.2 11 6.2 12.8 5.4V12.3C11 13.3 5 13.3 3.2 12.3Z" fill="url(#bg)"/></svg>
<div class="lbl" style="left:142px;top:201px"><span class="k" style="width:31.24px;transform:scaleX(0.710)">ボディ・</span><span class="k" style="width:21.01px;transform:scaleX(0.955)">上面</span></div>
<div class="row" style="left:84px;top:222.5px;width:138px"></div>
<svg class="abs" style="left:87px;top:226.5px" width="16" height="11" viewBox="0 0 16 11" ><path d="M0.5 5.5C3 1.5 6 0.5 8 0.5C10 0.5 13 1.5 15.5 5.5C13 9.5 10 10.5 8 10.5C6 10.5 3 9.5 0.5 5.5Z" fill="#9a9a9a"/><circle cx="8" cy="5.5" r="3.4" fill="#f1f1f1"/><circle cx="8" cy="5.5" r="2.1" fill="#9a9a9a"/></svg>
<svg class="abs" style="left:112px;top:224px" width="16" height="16" viewBox="0 0 16 16" ><defs><linearGradient id="bg" x1="0" x2="1"><stop offset="0" stop-color="#c9cdd3"/><stop offset=".55" stop-color="#f4f5f7"/><stop offset="1" stop-color="#fff"/></linearGradient></defs><path d="M1 3.5C1 1.8 3 0.8 8 0.8C13 0.8 15 1.8 15 3.5V12.5C15 14.2 13 15.2 8 15.2C3 15.2 1 14.2 1 12.5Z" fill="#fff" stroke="#30343c" stroke-width="1.25"/><path d="M3.2 5.4C5 6.2 11 6.2 12.8 5.4V12.3C11 13.3 5 13.3 3.2 12.3Z" fill="url(#bg)"/></svg>
<div class="lbl" style="left:142px;top:225px"><span class="k" style="width:31.24px;transform:scaleX(0.710)">ボディ・</span><span class="k" style="width:21.01px;transform:scaleX(0.955)">底面</span><span class="k" style="width:17.33px;transform:scaleX(1.050)"> (1)</span></div>
<div class="row" style="left:84px;top:246.5px;width:138px"></div>
<svg class="abs" style="left:87px;top:250.5px" width="16" height="11" viewBox="0 0 16 11" ><path d="M0.5 5.5C3 1.5 6 0.5 8 0.5C10 0.5 13 1.5 15.5 5.5C13 9.5 10 10.5 8 10.5C6 10.5 3 9.5 0.5 5.5Z" fill="#9a9a9a"/><circle cx="8" cy="5.5" r="3.4" fill="#f1f1f1"/><circle cx="8" cy="5.5" r="2.1" fill="#9a9a9a"/></svg>
<svg class="abs" style="left:112px;top:248px" width="16" height="16" viewBox="0 0 16 16" ><defs><linearGradient id="bg" x1="0" x2="1"><stop offset="0" stop-color="#c9cdd3"/><stop offset=".55" stop-color="#f4f5f7"/><stop offset="1" stop-color="#fff"/></linearGradient></defs><path d="M1 3.5C1 1.8 3 0.8 8 0.8C13 0.8 15 1.8 15 3.5V12.5C15 14.2 13 15.2 8 15.2C3 15.2 1 14.2 1 12.5Z" fill="#fff" stroke="#30343c" stroke-width="1.25"/><path d="M3.2 5.4C5 6.2 11 6.2 12.8 5.4V12.3C11 13.3 5 13.3 3.2 12.3Z" fill="url(#bg)"/></svg>
<div class="lbl" style="left:142px;top:249px"><span class="k" style="width:31.24px;transform:scaleX(0.710)">ボディ・</span><span class="k" style="width:21.01px;transform:scaleX(0.955)">前面</span><span class="k" style="width:17.33px;transform:scaleX(1.050)"> (1)</span></div>
<div class="row" style="left:84px;top:270.5px;width:154px"></div>
<svg class="abs" style="left:87px;top:274.5px" width="16" height="11" viewBox="0 0 16 11" ><path d="M0.5 5.5C3 1.5 6 0.5 8 0.5C10 0.5 13 1.5 15.5 5.5C13 9.5 10 10.5 8 10.5C6 10.5 3 9.5 0.5 5.5Z" fill="#9a9a9a"/><circle cx="8" cy="5.5" r="3.4" fill="#f1f1f1"/><circle cx="8" cy="5.5" r="2.1" fill="#9a9a9a"/></svg>
<svg class="abs" style="left:112px;top:272px" width="16" height="16" viewBox="0 0 16 16" ><defs><linearGradient id="bg" x1="0" x2="1"><stop offset="0" stop-color="#c9cdd3"/><stop offset=".55" stop-color="#f4f5f7"/><stop offset="1" stop-color="#fff"/></linearGradient></defs><path d="M1 3.5C1 1.8 3 0.8 8 0.8C13 0.8 15 1.8 15 3.5V12.5C15 14.2 13 15.2 8 15.2C3 15.2 1 14.2 1 12.5Z" fill="#fff" stroke="#30343c" stroke-width="1.25"/><path d="M3.2 5.4C5 6.2 11 6.2 12.8 5.4V12.3C11 13.3 5 13.3 3.2 12.3Z" fill="url(#bg)"/></svg>
<div class="lbl" style="left:142px;top:273px"><span class="k" style="width:31.24px;transform:scaleX(0.710)">ボディ・</span><span class="k" style="width:21.01px;transform:scaleX(0.955)">上面</span><span class="k" style="width:7.81px;transform:scaleX(0.710)">・</span><span class="k" style="width:10.50px;transform:scaleX(0.955)">前</span><span class="k" style="width:17.33px;transform:scaleX(1.050)"> (1)</span></div>
<div class="row" style="left:84px;top:294.5px;width:154px"></div>
<svg class="abs" style="left:87px;top:298.5px" width="16" height="11" viewBox="0 0 16 11" ><path d="M0.5 5.5C3 1.5 6 0.5 8 0.5C10 0.5 13 1.5 15.5 5.5C13 9.5 10 10.5 8 10.5C6 10.5 3 9.5 0.5 5.5Z" fill="#9a9a9a"/><circle cx="8" cy="5.5" r="3.4" fill="#f1f1f1"/><circle cx="8" cy="5.5" r="2.1" fill="#9a9a9a"/></svg>
<svg class="abs" style="left:112px;top:296px" width="16" height="16" viewBox="0 0 16 16" ><defs><linearGradient id="bg" x1="0" x2="1"><stop offset="0" stop-color="#c9cdd3"/><stop offset=".55" stop-color="#f4f5f7"/><stop offset="1" stop-color="#fff"/></linearGradient></defs><path d="M1 3.5C1 1.8 3 0.8 8 0.8C13 0.8 15 1.8 15 3.5V12.5C15 14.2 13 15.2 8 15.2C3 15.2 1 14.2 1 12.5Z" fill="#fff" stroke="#30343c" stroke-width="1.25"/><path d="M3.2 5.4C5 6.2 11 6.2 12.8 5.4V12.3C11 13.3 5 13.3 3.2 12.3Z" fill="url(#bg)"/></svg>
<div class="lbl" style="left:142px;top:297px"><span class="k" style="width:31.24px;transform:scaleX(0.710)">ボディ・</span><span class="k" style="width:21.01px;transform:scaleX(0.955)">背面</span><span class="k" style="width:34.65px;transform:scaleX(1.050)"> (1) (1)</span></div>
<div class="row" style="left:84px;top:318.5px;width:154px"></div>
<svg class="abs" style="left:87px;top:322.5px" width="16" height="11" viewBox="0 0 16 11" ><path d="M0.5 5.5C3 1.5 6 0.5 8 0.5C10 0.5 13 1.5 15.5 5.5C13 9.5 10 10.5 8 10.5C6 10.5 3 9.5 0.5 5.5Z" fill="#9a9a9a"/><circle cx="8" cy="5.5" r="3.4" fill="#f1f1f1"/><circle cx="8" cy="5.5" r="2.1" fill="#9a9a9a"/></svg>
<svg class="abs" style="left:112px;top:320px" width="16" height="16" viewBox="0 0 16 16" ><defs><linearGradient id="bg" x1="0" x2="1"><stop offset="0" stop-color="#c9cdd3"/><stop offset=".55" stop-color="#f4f5f7"/><stop offset="1" stop-color="#fff"/></linearGradient></defs><path d="M1 3.5C1 1.8 3 0.8 8 0.8C13 0.8 15 1.8 15 3.5V12.5C15 14.2 13 15.2 8 15.2C3 15.2 1 14.2 1 12.5Z" fill="#fff" stroke="#30343c" stroke-width="1.25"/><path d="M3.2 5.4C5 6.2 11 6.2 12.8 5.4V12.3C11 13.3 5 13.3 3.2 12.3Z" fill="url(#bg)"/></svg>
<div class="lbl" style="left:142px;top:321px"><span class="k" style="width:31.24px;transform:scaleX(0.710)">ボディ・</span><span class="k" style="width:21.01px;transform:scaleX(0.955)">上面</span><span class="k" style="width:7.81px;transform:scaleX(0.710)">・</span><span class="k" style="width:10.50px;transform:scaleX(0.955)">後</span><span class="k" style="width:17.33px;transform:scaleX(1.050)"> (1)</span></div>
<div class="row" style="left:84px;top:342.5px;width:130px"></div>
<svg class="abs" style="left:87px;top:346.5px" width="16" height="11" viewBox="0 0 16 11" ><path d="M0.5 5.5C3 1.5 6 0.5 8 0.5C10 0.5 13 1.5 15.5 5.5C13 9.5 10 10.5 8 10.5C6 10.5 3 9.5 0.5 5.5Z" fill="#9a9a9a"/><circle cx="8" cy="5.5" r="3.4" fill="#f1f1f1"/><circle cx="8" cy="5.5" r="2.1" fill="#9a9a9a"/></svg>
<svg class="abs" style="left:112px;top:344px" width="16" height="16" viewBox="0 0 16 16" ><defs><linearGradient id="bg" x1="0" x2="1"><stop offset="0" stop-color="#c9cdd3"/><stop offset=".55" stop-color="#f4f5f7"/><stop offset="1" stop-color="#fff"/></linearGradient></defs><path d="M1 3.5C1 1.8 3 0.8 8 0.8C13 0.8 15 1.8 15 3.5V12.5C15 14.2 13 15.2 8 15.2C3 15.2 1 14.2 1 12.5Z" fill="#fff" stroke="#30343c" stroke-width="1.25"/><path d="M3.2 5.4C5 6.2 11 6.2 12.8 5.4V12.3C11 13.3 5 13.3 3.2 12.3Z" fill="url(#bg)"/></svg>
<div class="lbl" style="left:142px;top:345px"><span class="k" style="width:21.01px;transform:scaleX(0.955)">電源</span><span class="k" style="width:23.43px;transform:scaleX(0.710)">ボタン</span><span class="k" style="width:17.33px;transform:scaleX(1.050)"> (1)</span></div>
<div class="row" style="left:84px;top:366.5px;width:150px"></div>
<svg class="abs" style="left:87px;top:370.5px" width="16" height="11" viewBox="0 0 16 11" ><path d="M0.5 5.5C3 1.5 6 0.5 8 0.5C10 0.5 13 1.5 15.5 5.5C13 9.5 10 10.5 8 10.5C6 10.5 3 9.5 0.5 5.5Z" fill="#9a9a9a"/><circle cx="8" cy="5.5" r="3.4" fill="#f1f1f1"/><circle cx="8" cy="5.5" r="2.1" fill="#9a9a9a"/></svg>
<svg class="abs" style="left:112px;top:368px" width="16" height="16" viewBox="0 0 16 16" ><defs><linearGradient id="bg" x1="0" x2="1"><stop offset="0" stop-color="#c9cdd3"/><stop offset=".55" stop-color="#f4f5f7"/><stop offset="1" stop-color="#fff"/></linearGradient></defs><path d="M1 3.5C1 1.8 3 0.8 8 0.8C13 0.8 15 1.8 15 3.5V12.5C15 14.2 13 15.2 8 15.2C3 15.2 1 14.2 1 12.5Z" fill="#fff" stroke="#30343c" stroke-width="1.25"/><path d="M3.2 5.4C5 6.2 11 6.2 12.8 5.4V12.3C11 13.3 5 13.3 3.2 12.3Z" fill="url(#bg)"/></svg>
<div class="lbl" style="left:142px;top:369px"><span class="k" style="width:78.10px;transform:scaleX(0.710)">フロントパネル・ドア</span></div>
<div class="row" style="left:84px;top:390.5px;width:150px"></div>
<svg class="abs" style="left:87px;top:394.5px" width="16" height="11" viewBox="0 0 16 11" ><path d="M0.5 5.5C3 1.5 6 0.5 8 0.5C10 0.5 13 1.5 15.5 5.5C13 9.5 10 10.5 8 10.5C6 10.5 3 9.5 0.5 5.5Z" fill="#9a9a9a"/><circle cx="8" cy="5.5" r="3.4" fill="#f1f1f1"/><circle cx="8" cy="5.5" r="2.1" fill="#9a9a9a"/></svg>
<svg class="abs" style="left:112px;top:392px" width="16" height="16" viewBox="0 0 16 16" ><defs><linearGradient id="bg" x1="0" x2="1"><stop offset="0" stop-color="#c9cdd3"/><stop offset=".55" stop-color="#f4f5f7"/><stop offset="1" stop-color="#fff"/></linearGradient></defs><path d="M1 3.5C1 1.8 3 0.8 8 0.8C13 0.8 15 1.8 15 3.5V12.5C15 14.2 13 15.2 8 15.2C3 15.2 1 14.2 1 12.5Z" fill="#fff" stroke="#30343c" stroke-width="1.25"/><path d="M3.2 5.4C5 6.2 11 6.2 12.8 5.4V12.3C11 13.3 5 13.3 3.2 12.3Z" fill="url(#bg)"/></svg>
<div class="lbl" style="left:142px;top:393px"><span class="k" style="width:21.01px;transform:scaleX(0.955)">内部</span><span class="k" style="width:39.05px;transform:scaleX(0.710)">フレーム・</span><span class="k" style="width:21.01px;transform:scaleX(0.955)">前面</span></div>
<div class="row" style="left:84px;top:414.5px;width:166px"></div>
<svg class="abs" style="left:87px;top:418.5px" width="16" height="11" viewBox="0 0 16 11" ><path d="M0.5 5.5C3 1.5 6 0.5 8 0.5C10 0.5 13 1.5 15.5 5.5C13 9.5 10 10.5 8 10.5C6 10.5 3 9.5 0.5 5.5Z" fill="#9a9a9a"/><circle cx="8" cy="5.5" r="3.4" fill="#f1f1f1"/><circle cx="8" cy="5.5" r="2.1" fill="#9a9a9a"/></svg>
<svg class="abs" style="left:112px;top:416px" width="16" height="16" viewBox="0 0 16 16" ><defs><linearGradient id="bg" x1="0" x2="1"><stop offset="0" stop-color="#c9cdd3"/><stop offset=".55" stop-color="#f4f5f7"/><stop offset="1" stop-color="#fff"/></linearGradient></defs><path d="M1 3.5C1 1.8 3 0.8 8 0.8C13 0.8 15 1.8 15 3.5V12.5C15 14.2 13 15.2 8 15.2C3 15.2 1 14.2 1 12.5Z" fill="#fff" stroke="#30343c" stroke-width="1.25"/><path d="M3.2 5.4C5 6.2 11 6.2 12.8 5.4V12.3C11 13.3 5 13.3 3.2 12.3Z" fill="url(#bg)"/></svg>
<div class="lbl" style="left:142px;top:417px"><span class="k" style="width:21.01px;transform:scaleX(0.955)">内部</span><span class="k" style="width:39.05px;transform:scaleX(0.710)">フレーム・</span><span class="k" style="width:21.01px;transform:scaleX(0.955)">前面</span><span class="k" style="width:17.33px;transform:scaleX(1.050)"> (1)</span></div>
<div class="row" style="left:84px;top:438.5px;width:166px"></div>
<svg class="abs" style="left:87px;top:442.5px" width="16" height="11" viewBox="0 0 16 11" ><path d="M0.5 5.5C3 1.5 6 0.5 8 0.5C10 0.5 13 1.5 15.5 5.5C13 9.5 10 10.5 8 10.5C6 10.5 3 9.5 0.5 5.5Z" fill="#9a9a9a"/><circle cx="8" cy="5.5" r="3.4" fill="#f1f1f1"/><circle cx="8" cy="5.5" r="2.1" fill="#9a9a9a"/></svg>
<svg class="abs" style="left:112px;top:440px" width="16" height="16" viewBox="0 0 16 16" ><defs><linearGradient id="bg" x1="0" x2="1"><stop offset="0" stop-color="#c9cdd3"/><stop offset=".55" stop-color="#f4f5f7"/><stop offset="1" stop-color="#fff"/></linearGradient></defs><path d="M1 3.5C1 1.8 3 0.8 8 0.8C13 0.8 15 1.8 15 3.5V12.5C15 14.2 13 15.2 8 15.2C3 15.2 1 14.2 1 12.5Z" fill="#fff" stroke="#30343c" stroke-width="1.25"/><path d="M3.2 5.4C5 6.2 11 6.2 12.8 5.4V12.3C11 13.3 5 13.3 3.2 12.3Z" fill="url(#bg)"/></svg>
<div class="lbl" style="left:142px;top:441px"><span class="k" style="width:21.01px;transform:scaleX(0.955)">内部</span><span class="k" style="width:39.05px;transform:scaleX(0.710)">フレーム・</span><span class="k" style="width:21.01px;transform:scaleX(0.955)">前面</span><span class="k" style="width:17.33px;transform:scaleX(1.050)"> (2)</span></div>
<div class="row" style="left:84px;top:462.5px;width:150px"></div>
<svg class="abs" style="left:87px;top:466.5px" width="16" height="11" viewBox="0 0 16 11" ><path d="M0.5 5.5C3 1.5 6 0.5 8 0.5C10 0.5 13 1.5 15.5 5.5C13 9.5 10 10.5 8 10.5C6 10.5 3 9.5 0.5 5.5Z" fill="#9a9a9a"/><circle cx="8" cy="5.5" r="3.4" fill="#f1f1f1"/><circle cx="8" cy="5.5" r="2.1" fill="#9a9a9a"/></svg>
<svg class="abs" style="left:112px;top:464px" width="16" height="16" viewBox="0 0 16 16" ><defs><linearGradient id="bg" x1="0" x2="1"><stop offset="0" stop-color="#c9cdd3"/><stop offset=".55" stop-color="#f4f5f7"/><stop offset="1" stop-color="#fff"/></linearGradient></defs><path d="M1 3.5C1 1.8 3 0.8 8 0.8C13 0.8 15 1.8 15 3.5V12.5C15 14.2 13 15.2 8 15.2C3 15.2 1 14.2 1 12.5Z" fill="#fff" stroke="#30343c" stroke-width="1.25"/><path d="M3.2 5.4C5 6.2 11 6.2 12.8 5.4V12.3C11 13.3 5 13.3 3.2 12.3Z" fill="url(#bg)"/></svg>
<div class="lbl" style="left:142px;top:465px"><span class="k" style="width:21.01px;transform:scaleX(0.955)">内部</span><span class="k" style="width:39.05px;transform:scaleX(0.710)">フレーム・</span><span class="k" style="width:21.01px;transform:scaleX(0.955)">背面</span></div>
<div class="row" style="left:84px;top:486.5px;width:150px"></div>
<svg class="abs" style="left:87px;top:490.5px" width="16" height="11" viewBox="0 0 16 11" ><path d="M0.5 5.5C3 1.5 6 0.5 8 0.5C10 0.5 13 1.5 15.5 5.5C13 9.5 10 10.5 8 10.5C6 10.5 3 9.5 0.5 5.5Z" fill="#9a9a9a"/><circle cx="8" cy="5.5" r="3.4" fill="#f1f1f1"/><circle cx="8" cy="5.5" r="2.1" fill="#9a9a9a"/></svg>
<svg class="abs" style="left:112px;top:488px" width="16" height="16" viewBox="0 0 16 16" ><defs><linearGradient id="bg" x1="0" x2="1"><stop offset="0" stop-color="#c9cdd3"/><stop offset=".55" stop-color="#f4f5f7"/><stop offset="1" stop-color="#fff"/></linearGradient></defs><path d="M1 3.5C1 1.8 3 0.8 8 0.8C13 0.8 15 1.8 15 3.5V12.5C15 14.2 13 15.2 8 15.2C3 15.2 1 14.2 1 12.5Z" fill="#fff" stroke="#30343c" stroke-width="1.25"/><path d="M3.2 5.4C5 6.2 11 6.2 12.8 5.4V12.3C11 13.3 5 13.3 3.2 12.3Z" fill="url(#bg)"/></svg>
<div class="lbl" style="left:142px;top:489px"><span class="k" style="width:21.01px;transform:scaleX(0.955)">内部</span><span class="k" style="width:39.05px;transform:scaleX(0.710)">フレーム・</span><span class="k" style="width:21.01px;transform:scaleX(0.955)">右麺</span></div>
<div class="row" style="left:84px;top:510.5px;width:170px"></div>
<svg class="abs" style="left:87px;top:514.5px" width="16" height="11" viewBox="0 0 16 11" ><path d="M0.5 5.5C3 1.5 6 0.5 8 0.5C10 0.5 13 1.5 15.5 5.5C13 9.5 10 10.5 8 10.5C6 10.5 3 9.5 0.5 5.5Z" fill="#9a9a9a"/><circle cx="8" cy="5.5" r="3.4" fill="#f1f1f1"/><circle cx="8" cy="5.5" r="2.1" fill="#9a9a9a"/></svg>
<svg class="abs" style="left:112px;top:512px" width="16" height="16" viewBox="0 0 16 16" ><defs><linearGradient id="bg" x1="0" x2="1"><stop offset="0" stop-color="#c9cdd3"/><stop offset=".55" stop-color="#f4f5f7"/><stop offset="1" stop-color="#fff"/></linearGradient></defs><path d="M1 3.5C1 1.8 3 0.8 8 0.8C13 0.8 15 1.8 15 3.5V12.5C15 14.2 13 15.2 8 15.2C3 15.2 1 14.2 1 12.5Z" fill="#fff" stroke="#30343c" stroke-width="1.25"/><path d="M3.2 5.4C5 6.2 11 6.2 12.8 5.4V12.3C11 13.3 5 13.3 3.2 12.3Z" fill="url(#bg)"/></svg>
<div class="lbl" style="left:142px;top:513px"><span class="k" style="width:40.69px;transform:scaleX(0.900)">CD-ROM</span><span class="k" style="width:62.48px;transform:scaleX(0.710)">ドライブ・ボタン</span></div>
<div class="row" style="left:84px;top:534.5px;width:190px"></div>
<svg class="abs" style="left:87px;top:538.5px" width="16" height="11" viewBox="0 0 16 11" ><path d="M0.5 5.5C3 1.5 6 0.5 8 0.5C10 0.5 13 1.5 15.5 5.5C13 9.5 10 10.5 8 10.5C6 10.5 3 9.5 0.5 5.5Z" fill="#9a9a9a"/><circle cx="8" cy="5.5" r="3.4" fill="#f1f1f1"/><circle cx="8" cy="5.5" r="2.1" fill="#9a9a9a"/></svg>
<svg class="abs" style="left:112px;top:536px" width="16" height="16" viewBox="0 0 16 16" ><defs><linearGradient id="bg" x1="0" x2="1"><stop offset="0" stop-color="#c9cdd3"/><stop offset=".55" stop-color="#f4f5f7"/><stop offset="1" stop-color="#fff"/></linearGradient></defs><path d="M1 3.5C1 1.8 3 0.8 8 0.8C13 0.8 15 1.8 15 3.5V12.5C15 14.2 13 15.2 8 15.2C3 15.2 1 14.2 1 12.5Z" fill="#fff" stroke="#30343c" stroke-width="1.25"/><path d="M3.2 5.4C5 6.2 11 6.2 12.8 5.4V12.3C11 13.3 5 13.3 3.2 12.3Z" fill="url(#bg)"/></svg>
<div class="lbl" style="left:142px;top:537px"><span class="k" style="width:40.69px;transform:scaleX(0.900)">CD-ROM</span><span class="k" style="width:39.05px;transform:scaleX(0.710)">ドライブ・</span><span class="k" style="width:10.50px;transform:scaleX(0.955)">蓋</span><span class="k" style="width:34.65px;transform:scaleX(1.050)"> (1) (1)</span></div>
<div class="row" style="left:84px;top:558.5px;width:178px"></div>
<svg class="abs" style="left:87px;top:562.5px" width="16" height="11" viewBox="0 0 16 11" ><path d="M0.5 5.5C3 1.5 6 0.5 8 0.5C10 0.5 13 1.5 15.5 5.5C13 9.5 10 10.5 8 10.5C6 10.5 3 9.5 0.5 5.5Z" fill="#9a9a9a"/><circle cx="8" cy="5.5" r="3.4" fill="#f1f1f1"/><circle cx="8" cy="5.5" r="2.1" fill="#9a9a9a"/></svg>
<svg class="abs" style="left:112px;top:560px" width="16" height="16" viewBox="0 0 16 16" ><defs><linearGradient id="bg" x1="0" x2="1"><stop offset="0" stop-color="#c9cdd3"/><stop offset=".55" stop-color="#f4f5f7"/><stop offset="1" stop-color="#fff"/></linearGradient></defs><path d="M1 3.5C1 1.8 3 0.8 8 0.8C13 0.8 15 1.8 15 3.5V12.5C15 14.2 13 15.2 8 15.2C3 15.2 1 14.2 1 12.5Z" fill="#fff" stroke="#30343c" stroke-width="1.25"/><path d="M3.2 5.4C5 6.2 11 6.2 12.8 5.4V12.3C11 13.3 5 13.3 3.2 12.3Z" fill="url(#bg)"/></svg>
<div class="lbl" style="left:142px;top:561px"><span class="k" style="width:40.69px;transform:scaleX(0.900)">CD-ROM</span><span class="k" style="width:70.29px;transform:scaleX(0.710)">ドライブ・メディア</span></div>
<div class="row" style="left:84px;top:582.5px;width:154px"></div>
<svg class="abs" style="left:87px;top:586.5px" width="16" height="11" viewBox="0 0 16 11" ><path d="M0.5 5.5C3 1.5 6 0.5 8 0.5C10 0.5 13 1.5 15.5 5.5C13 9.5 10 10.5 8 10.5C6 10.5 3 9.5 0.5 5.5Z" fill="#9a9a9a"/><circle cx="8" cy="5.5" r="3.4" fill="#f1f1f1"/><circle cx="8" cy="5.5" r="2.1" fill="#9a9a9a"/></svg>
<svg class="abs" style="left:112px;top:584px" width="16" height="16" viewBox="0 0 16 16" ><defs><linearGradient id="bg" x1="0" x2="1"><stop offset="0" stop-color="#c9cdd3"/><stop offset=".55" stop-color="#f4f5f7"/><stop offset="1" stop-color="#fff"/></linearGradient></defs><path d="M1 3.5C1 1.8 3 0.8 8 0.8C13 0.8 15 1.8 15 3.5V12.5C15 14.2 13 15.2 8 15.2C3 15.2 1 14.2 1 12.5Z" fill="#fff" stroke="#30343c" stroke-width="1.25"/><path d="M3.2 5.4C5 6.2 11 6.2 12.8 5.4V12.3C11 13.3 5 13.3 3.2 12.3Z" fill="url(#bg)"/></svg>
<div class="lbl" style="left:142px;top:585px"><span class="k" style="width:54.67px;transform:scaleX(0.710)">サイドパネル・</span><span class="k" style="width:10.50px;transform:scaleX(0.955)">右</span><span class="k" style="width:17.33px;transform:scaleX(1.050)"> (1)</span></div>
<div class="row" style="left:84px;top:606.5px;width:154px"></div>
<svg class="abs" style="left:87px;top:610.5px" width="16" height="11" viewBox="0 0 16 11" ><path d="M0.5 5.5C3 1.5 6 0.5 8 0.5C10 0.5 13 1.5 15.5 5.5C13 9.5 10 10.5 8 10.5C6 10.5 3 9.5 0.5 5.5Z" fill="#9a9a9a"/><circle cx="8" cy="5.5" r="3.4" fill="#f1f1f1"/><circle cx="8" cy="5.5" r="2.1" fill="#9a9a9a"/></svg>
<svg class="abs" style="left:112px;top:608px" width="16" height="16" viewBox="0 0 16 16" ><defs><linearGradient id="bg" x1="0" x2="1"><stop offset="0" stop-color="#c9cdd3"/><stop offset=".55" stop-color="#f4f5f7"/><stop offset="1" stop-color="#fff"/></linearGradient></defs><path d="M1 3.5C1 1.8 3 0.8 8 0.8C13 0.8 15 1.8 15 3.5V12.5C15 14.2 13 15.2 8 15.2C3 15.2 1 14.2 1 12.5Z" fill="#fff" stroke="#30343c" stroke-width="1.25"/><path d="M3.2 5.4C5 6.2 11 6.2 12.8 5.4V12.3C11 13.3 5 13.3 3.2 12.3Z" fill="url(#bg)"/></svg>
<div class="lbl" style="left:142px;top:609px"><span class="k" style="width:54.67px;transform:scaleX(0.710)">サイドパネル・</span><span class="k" style="width:10.50px;transform:scaleX(0.955)">左</span><span class="k" style="width:17.33px;transform:scaleX(1.050)"> (1)</span></div>
<div class="row" style="left:84px;top:630.5px;width:186px"></div>
<svg class="abs" style="left:87px;top:634.5px" width="16" height="11" viewBox="0 0 16 11" ><path d="M0.5 5.5C3 1.5 6 0.5 8 0.5C10 0.5 13 1.5 15.5 5.5C13 9.5 10 10.5 8 10.5C6 10.5 3 9.5 0.5 5.5Z" fill="#9a9a9a"/><circle cx="8" cy="5.5" r="3.4" fill="#f1f1f1"/><circle cx="8" cy="5.5" r="2.1" fill="#9a9a9a"/></svg>
<svg class="abs" style="left:112px;top:632px" width="16" height="16" viewBox="0 0 16 16" ><defs><linearGradient id="bg" x1="0" x2="1"><stop offset="0" stop-color="#c9cdd3"/><stop offset=".55" stop-color="#f4f5f7"/><stop offset="1" stop-color="#fff"/></linearGradient></defs><path d="M1 3.5C1 1.8 3 0.8 8 0.8C13 0.8 15 1.8 15 3.5V12.5C15 14.2 13 15.2 8 15.2C3 15.2 1 14.2 1 12.5Z" fill="#fff" stroke="#30343c" stroke-width="1.25"/><path d="M3.2 5.4C5 6.2 11 6.2 12.8 5.4V12.3C11 13.3 5 13.3 3.2 12.3Z" fill="url(#bg)"/></svg>
<div class="lbl" style="left:142px;top:633px"><span class="k" style="width:54.67px;transform:scaleX(0.710)">サイドパネル・</span><span class="k" style="width:10.50px;transform:scaleX(0.955)">左</span><span class="k" style="width:51.98px;transform:scaleX(1.050)"> (1) (1) (2)</span></div>
<div class="row" style="left:84px;top:654.5px;width:186px"></div>
<svg class="abs" style="left:87px;top:658.5px" width="16" height="11" viewBox="0 0 16 11" ><path d="M0.5 5.5C3 1.5 6 0.5 8 0.5C10 0.5 13 1.5 15.5 5.5C13 9.5 10 10.5 8 10.5C6 10.5 3 9.5 0.5 5.5Z" fill="#9a9a9a"/><circle cx="8" cy="5.5" r="3.4" fill="#f1f1f1"/><circle cx="8" cy="5.5" r="2.1" fill="#9a9a9a"/></svg>
<svg class="abs" style="left:112px;top:656px" width="16" height="16" viewBox="0 0 16 16" ><defs><linearGradient id="bg" x1="0" x2="1"><stop offset="0" stop-color="#c9cdd3"/><stop offset=".55" stop-color="#f4f5f7"/><stop offset="1" stop-color="#fff"/></linearGradient></defs><path d="M1 3.5C1 1.8 3 0.8 8 0.8C13 0.8 15 1.8 15 3.5V12.5C15 14.2 13 15.2 8 15.2C3 15.2 1 14.2 1 12.5Z" fill="#fff" stroke="#30343c" stroke-width="1.25"/><path d="M3.2 5.4C5 6.2 11 6.2 12.8 5.4V12.3C11 13.3 5 13.3 3.2 12.3Z" fill="url(#bg)"/></svg>
<div class="lbl" style="left:142px;top:657px"><span class="k" style="width:54.67px;transform:scaleX(0.710)">サイドパネル・</span><span class="k" style="width:10.50px;transform:scaleX(0.955)">右</span><span class="k" style="width:51.98px;transform:scaleX(1.050)"> (1) (1) (2)</span></div>
<div class="row" style="left:84px;top:678.5px;width:226px"></div>
<svg class="abs" style="left:87px;top:682.5px" width="16" height="11" viewBox="0 0 16 11" ><path d="M0.5 5.5C3 1.5 6 0.5 8 0.5C10 0.5 13 1.5 15.5 5.5C13 9.5 10 10.5 8 10.5C6 10.5 3 9.5 0.5 5.5Z" fill="#9a9a9a"/><circle cx="8" cy="5.5" r="3.4" fill="#f1f1f1"/><circle cx="8" cy="5.5" r="2.1" fill="#9a9a9a"/></svg>
<svg class="abs" style="left:112px;top:680px" width="16" height="16" viewBox="0 0 16 16" ><defs><linearGradient id="bg" x1="0" x2="1"><stop offset="0" stop-color="#c9cdd3"/><stop offset=".55" stop-color="#f4f5f7"/><stop offset="1" stop-color="#fff"/></linearGradient></defs><path d="M1 3.5C1 1.8 3 0.8 8 0.8C13 0.8 15 1.8 15 3.5V12.5C15 14.2 13 15.2 8 15.2C3 15.2 1 14.2 1 12.5Z" fill="#fff" stroke="#30343c" stroke-width="1.25"/><path d="M3.2 5.4C5 6.2 11 6.2 12.8 5.4V12.3C11 13.3 5 13.3 3.2 12.3Z" fill="url(#bg)"/></svg>
<div class="lbl" style="left:142px;top:681px"><span class="k" style="width:40.69px;transform:scaleX(0.900)">CD-ROM</span><span class="k" style="width:62.48px;transform:scaleX(0.710)">ドライブ・アーム</span><span class="k" style="width:53.63px;transform:scaleX(0.975)"> (1) (1) (1...</span></div>
<div class="row" style="left:84px;top:702.5px;width:226px"></div>
<svg class="abs" style="left:87px;top:706.5px" width="16" height="11" viewBox="0 0 16 11" ><path d="M0.5 5.5C3 1.5 6 0.5 8 0.5C10 0.5 13 1.5 15.5 5.5C13 9.5 10 10.5 8 10.5C6 10.5 3 9.5 0.5 5.5Z" fill="#9a9a9a"/><circle cx="8" cy="5.5" r="3.4" fill="#f1f1f1"/><circle cx="8" cy="5.5" r="2.1" fill="#9a9a9a"/></svg>
<svg class="abs" style="left:112px;top:704px" width="16" height="16" viewBox="0 0 16 16" ><defs><linearGradient id="bg" x1="0" x2="1"><stop offset="0" stop-color="#c9cdd3"/><stop offset=".55" stop-color="#f4f5f7"/><stop offset="1" stop-color="#fff"/></linearGradient></defs><path d="M1 3.5C1 1.8 3 0.8 8 0.8C13 0.8 15 1.8 15 3.5V12.5C15 14.2 13 15.2 8 15.2C3 15.2 1 14.2 1 12.5Z" fill="#fff" stroke="#30343c" stroke-width="1.25"/><path d="M3.2 5.4C5 6.2 11 6.2 12.8 5.4V12.3C11 13.3 5 13.3 3.2 12.3Z" fill="url(#bg)"/></svg>
<div class="lbl" style="left:142px;top:705px"><span class="k" style="width:40.69px;transform:scaleX(0.900)">CD-ROM</span><span class="k" style="width:62.48px;transform:scaleX(0.710)">ドライブ・アーム</span><span class="k" style="width:53.63px;transform:scaleX(0.975)"> (1) (1) (1...</span></div>
<div class="row" style="left:84px;top:726.5px;width:130px"></div>
<svg class="abs" style="left:87px;top:730.5px" width="16" height="11" viewBox="0 0 16 11" ><path d="M0.5 5.5C3 1.5 6 0.5 8 0.5C10 0.5 13 1.5 15.5 5.5C13 9.5 10 10.5 8 10.5C6 10.5 3 9.5 0.5 5.5Z" fill="#9a9a9a"/><circle cx="8" cy="5.5" r="3.4" fill="#f1f1f1"/><circle cx="8" cy="5.5" r="2.1" fill="#9a9a9a"/></svg>
<svg class="abs" style="left:112px;top:728px" width="16" height="16" viewBox="0 0 16 16" ><defs><linearGradient id="bg" x1="0" x2="1"><stop offset="0" stop-color="#c9cdd3"/><stop offset=".55" stop-color="#f4f5f7"/><stop offset="1" stop-color="#fff"/></linearGradient></defs><path d="M1 3.5C1 1.8 3 0.8 8 0.8C13 0.8 15 1.8 15 3.5V12.5C15 14.2 13 15.2 8 15.2C3 15.2 1 14.2 1 12.5Z" fill="#fff" stroke="#30343c" stroke-width="1.25"/><path d="M3.2 5.4C5 6.2 11 6.2 12.8 5.4V12.3C11 13.3 5 13.3 3.2 12.3Z" fill="url(#bg)"/></svg>
<div class="lbl" style="left:142px;top:729px"><span class="k" style="width:62.48px;transform:scaleX(0.710)">パッド・コネクタ</span></div>
<div class="row" style="left:84px;top:750.5px;width:118px"></div>
<svg class="abs" style="left:87px;top:754.5px" width="16" height="11" viewBox="0 0 16 11" ><path d="M0.5 5.5C3 1.5 6 0.5 8 0.5C10 0.5 13 1.5 15.5 5.5C13 9.5 10 10.5 8 10.5C6 10.5 3 9.5 0.5 5.5Z" fill="#9a9a9a"/><circle cx="8" cy="5.5" r="3.4" fill="#f1f1f1"/><circle cx="8" cy="5.5" r="2.1" fill="#9a9a9a"/></svg>
<svg class="abs" style="left:112px;top:752px" width="16" height="16" viewBox="0 0 16 16" ><defs><linearGradient id="bg" x1="0" x2="1"><stop offset="0" stop-color="#c9cdd3"/><stop offset=".55" stop-color="#f4f5f7"/><stop offset="1" stop-color="#fff"/></linearGradient></defs><path d="M1 3.5C1 1.8 3 0.8 8 0.8C13 0.8 15 1.8 15 3.5V12.5C15 14.2 13 15.2 8 15.2C3 15.2 1 14.2 1 12.5Z" fill="#fff" stroke="#30343c" stroke-width="1.25"/><path d="M3.2 5.4C5 6.2 11 6.2 12.8 5.4V12.3C11 13.3 5 13.3 3.2 12.3Z" fill="url(#bg)"/></svg>
<div class="lbl" style="left:142px;top:753px"><span class="k" style="width:31.24px;transform:scaleX(0.710)">パッド・</span><span class="k" style="width:21.01px;transform:scaleX(0.955)">上面</span></div>
<div class="row" style="left:84px;top:774.5px;width:118px"></div>
<svg class="abs" style="left:87px;top:778.5px" width="16" height="11" viewBox="0 0 16 11" ><path d="M0.5 5.5C3 1.5 6 0.5 8 0.5C10 0.5 13 1.5 15.5 5.5C13 9.5 10 10.5 8 10.5C6 10.5 3 9.5 0.5 5.5Z" fill="#9a9a9a"/><circle cx="8" cy="5.5" r="3.4" fill="#f1f1f1"/><circle cx="8" cy="5.5" r="2.1" fill="#9a9a9a"/></svg>
<svg class="abs" style="left:112px;top:776px" width="16" height="16" viewBox="0 0 16 16" ><defs><linearGradient id="bg" x1="0" x2="1"><stop offset="0" stop-color="#c9cdd3"/><stop offset=".55" stop-color="#f4f5f7"/><stop offset="1" stop-color="#fff"/></linearGradient></defs><path d="M1 3.5C1 1.8 3 0.8 8 0.8C13 0.8 15 1.8 15 3.5V12.5C15 14.2 13 15.2 8 15.2C3 15.2 1 14.2 1 12.5Z" fill="#fff" stroke="#30343c" stroke-width="1.25"/><path d="M3.2 5.4C5 6.2 11 6.2 12.8 5.4V12.3C11 13.3 5 13.3 3.2 12.3Z" fill="url(#bg)"/></svg>
<div class="lbl" style="left:142px;top:777px"><span class="k" style="width:31.24px;transform:scaleX(0.710)">パッド・</span><span class="k" style="width:21.01px;transform:scaleX(0.955)">底面</span></div>
<div class="row" style="left:84px;top:798.5px;width:146px"></div>
<svg class="abs" style="left:87px;top:802.5px" width="16" height="11" viewBox="0 0 16 11" ><path d="M0.5 5.5C3 1.5 6 0.5 8 0.5C10 0.5 13 1.5 15.5 5.5C13 9.5 10 10.5 8 10.5C6 10.5 3 9.5 0.5 5.5Z" fill="#9a9a9a"/><circle cx="8" cy="5.5" r="3.4" fill="#f1f1f1"/><circle cx="8" cy="5.5" r="2.1" fill="#9a9a9a"/></svg>
<svg class="abs" style="left:112px;top:800px" width="16" height="16" viewBox="0 0 16 16" ><defs><linearGradient id="bg" x1="0" x2="1"><stop offset="0" stop-color="#c9cdd3"/><stop offset=".55" stop-color="#f4f5f7"/><stop offset="1" stop-color="#fff"/></linearGradient></defs><path d="M1 3.5C1 1.8 3 0.8 8 0.8C13 0.8 15 1.8 15 3.5V12.5C15 14.2 13 15.2 8 15.2C3 15.2 1 14.2 1 12.5Z" fill="#fff" stroke="#30343c" stroke-width="1.25"/><path d="M3.2 5.4C5 6.2 11 6.2 12.8 5.4V12.3C11 13.3 5 13.3 3.2 12.3Z" fill="url(#bg)"/></svg>
<div class="lbl" style="left:142px;top:801px"><span class="k" style="width:31.24px;transform:scaleX(0.710)">パッド・</span><span class="k" style="width:21.45px;transform:scaleX(0.900)">RUN</span><span class="k" style="width:23.43px;transform:scaleX(0.710)">ボタン</span></div>
<div class="row" style="left:84px;top:822.5px;width:130px"></div>
<svg class="abs" style="left:87px;top:826.5px" width="16" height="11" viewBox="0 0 16 11" ><path d="M0.5 5.5C3 1.5 6 0.5 8 0.5C10 0.5 13 1.5 15.5 5.5C13 9.5 10 10.5 8 10.5C6 10.5 3 9.5 0.5 5.5Z" fill="#9a9a9a"/><circle cx="8" cy="5.5" r="3.4" fill="#f1f1f1"/><circle cx="8" cy="5.5" r="2.1" fill="#9a9a9a"/></svg>
<svg class="abs" style="left:112px;top:824px" width="16" height="16" viewBox="0 0 16 16" ><defs><linearGradient id="bg" x1="0" x2="1"><stop offset="0" stop-color="#c9cdd3"/><stop offset=".55" stop-color="#f4f5f7"/><stop offset="1" stop-color="#fff"/></linearGradient></defs><path d="M1 3.5C1 1.8 3 0.8 8 0.8C13 0.8 15 1.8 15 3.5V12.5C15 14.2 13 15.2 8 15.2C3 15.2 1 14.2 1 12.5Z" fill="#fff" stroke="#30343c" stroke-width="1.25"/><path d="M3.2 5.4C5 6.2 11 6.2 12.8 5.4V12.3C11 13.3 5 13.3 3.2 12.3Z" fill="url(#bg)"/></svg>
<div class="lbl" style="left:142px;top:825px"><span class="k" style="width:31.24px;transform:scaleX(0.710)">パッド・</span><span class="k" style="width:29.70px;transform:scaleX(0.900)">MODE</span><span class="k" style="width:6.42px;transform:scaleX(1.050)">1</span></div>
<div class="row" style="left:84px;top:846.5px;width:134px"></div>
<svg class="abs" style="left:87px;top:850.5px" width="16" height="11" viewBox="0 0 16 11" ><path d="M0.5 5.5C3 1.5 6 0.5 8 0.5C10 0.5 13 1.5 15.5 5.5C13 9.5 10 10.5 8 10.5C6 10.5 3 9.5 0.5 5.5Z" fill="#9a9a9a"/><circle cx="8" cy="5.5" r="3.4" fill="#f1f1f1"/><circle cx="8" cy="5.5" r="2.1" fill="#9a9a9a"/></svg>
<svg class="abs" style="left:112px;top:848px" width="16" height="16" viewBox="0 0 16 16" ><defs><linearGradient id="bg" x1="0" x2="1"><stop offset="0" stop-color="#c9cdd3"/><stop offset=".55" stop-color="#f4f5f7"/><stop offset="1" stop-color="#fff"/></linearGradient></defs><path d="M1 3.5C1 1.8 3 0.8 8 0.8C13 0.8 15 1.8 15 3.5V12.5C15 14.2 13 15.2 8 15.2C3 15.2 1 14.2 1 12.5Z" fill="#fff" stroke="#30343c" stroke-width="1.25"/><path d="M3.2 5.4C5 6.2 11 6.2 12.8 5.4V12.3C11 13.3 5 13.3 3.2 12.3Z" fill="url(#bg)"/></svg>
<div class="lbl" style="left:142px;top:849px"><span class="k" style="width:31.24px;transform:scaleX(0.710)">パッド・</span><span class="k" style="width:29.70px;transform:scaleX(0.900)">MODE</span><span class="k" style="width:6.42px;transform:scaleX(1.050)">2</span></div>
<div class="row" style="left:84px;top:870.5px;width:162px"></div>
<svg class="abs" style="left:87px;top:874.5px" width="16" height="11" viewBox="0 0 16 11" ><path d="M0.5 5.5C3 1.5 6 0.5 8 0.5C10 0.5 13 1.5 15.5 5.5C13 9.5 10 10.5 8 10.5C6 10.5 3 9.5 0.5 5.5Z" fill="#9a9a9a"/><circle cx="8" cy="5.5" r="3.4" fill="#f1f1f1"/><circle cx="8" cy="5.5" r="2.1" fill="#9a9a9a"/></svg>
<svg class="abs" style="left:112px;top:872px" width="16" height="16" viewBox="0 0 16 16" ><defs><linearGradient id="bg" x1="0" x2="1"><stop offset="0" stop-color="#c9cdd3"/><stop offset=".55" stop-color="#f4f5f7"/><stop offset="1" stop-color="#fff"/></linearGradient></defs><path d="M1 3.5C1 1.8 3 0.8 8 0.8C13 0.8 15 1.8 15 3.5V12.5C15 14.2 13 15.2 8 15.2C3 15.2 1 14.2 1 12.5Z" fill="#fff" stroke="#30343c" stroke-width="1.25"/><path d="M3.2 5.4C5 6.2 11 6.2 12.8 5.4V12.3C11 13.3 5 13.3 3.2 12.3Z" fill="url(#bg)"/></svg>
<div class="lbl" style="left:142px;top:873px"><span class="k" style="width:31.24px;transform:scaleX(0.710)">パッド・</span><span class="k" style="width:38.51px;transform:scaleX(0.900)">SELECT</span><span class="k" style="width:23.43px;transform:scaleX(0.710)">ボタン</span></div>
<div class="row" style="left:84px;top:894.5px;width:130px"></div>
<svg class="abs" style="left:87px;top:898.5px" width="16" height="11" viewBox="0 0 16 11" ><path d="M0.5 5.5C3 1.5 6 0.5 8 0.5C10 0.5 13 1.5 15.5 5.5C13 9.5 10 10.5 8 10.5C6 10.5 3 9.5 0.5 5.5Z" fill="#9a9a9a"/><circle cx="8" cy="5.5" r="3.4" fill="#f1f1f1"/><circle cx="8" cy="5.5" r="2.1" fill="#9a9a9a"/></svg>
<svg class="abs" style="left:112px;top:896px" width="16" height="16" viewBox="0 0 16 16" ><defs><linearGradient id="bg" x1="0" x2="1"><stop offset="0" stop-color="#c9cdd3"/><stop offset=".55" stop-color="#f4f5f7"/><stop offset="1" stop-color="#fff"/></linearGradient></defs><path d="M1 3.5C1 1.8 3 0.8 8 0.8C13 0.8 15 1.8 15 3.5V12.5C15 14.2 13 15.2 8 15.2C3 15.2 1 14.2 1 12.5Z" fill="#fff" stroke="#30343c" stroke-width="1.25"/><path d="M3.2 5.4C5 6.2 11 6.2 12.8 5.4V12.3C11 13.3 5 13.3 3.2 12.3Z" fill="url(#bg)"/></svg>
<div class="lbl" style="left:142px;top:897px"><span class="k" style="width:54.67px;transform:scaleX(0.710)">パッド・ボタン</span><span class="k" style="width:6.60px;transform:scaleX(0.900)">A</span></div>
<div class="row" style="left:84px;top:918.5px;width:130px"></div>
<svg class="abs" style="left:87px;top:922.5px" width="16" height="11" viewBox="0 0 16 11" ><path d="M0.5 5.5C3 1.5 6 0.5 8 0.5C10 0.5 13 1.5 15.5 5.5C13 9.5 10 10.5 8 10.5C6 10.5 3 9.5 0.5 5.5Z" fill="#9a9a9a"/><circle cx="8" cy="5.5" r="3.4" fill="#f1f1f1"/><circle cx="8" cy="5.5" r="2.1" fill="#9a9a9a"/></svg>
<svg class="abs" style="left:112px;top:920px" width="16" height="16" viewBox="0 0 16 16" ><defs><linearGradient id="bg" x1="0" x2="1"><stop offset="0" stop-color="#c9cdd3"/><stop offset=".55" stop-color="#f4f5f7"/><stop offset="1" stop-color="#fff"/></linearGradient></defs><path d="M1 3.5C1 1.8 3 0.8 8 0.8C13 0.8 15 1.8 15 3.5V12.5C15 14.2 13 15.2 8 15.2C3 15.2 1 14.2 1 12.5Z" fill="#fff" stroke="#30343c" stroke-width="1.25"/><path d="M3.2 5.4C5 6.2 11 6.2 12.8 5.4V12.3C11 13.3 5 13.3 3.2 12.3Z" fill="url(#bg)"/></svg>
<div class="lbl" style="left:142px;top:921px"><span class="k" style="width:54.67px;transform:scaleX(0.710)">パッド・ボタン</span><span class="k" style="width:6.60px;transform:scaleX(0.900)">B</span></div>
<div class="row" style="left:84px;top:942.5px;width:130px"></div>
<svg class="abs" style="left:87px;top:946.5px" width="16" height="11" viewBox="0 0 16 11" ><path d="M0.5 5.5C3 1.5 6 0.5 8 0.5C10 0.5 13 1.5 15.5 5.5C13 9.5 10 10.5 8 10.5C6 10.5 3 9.5 0.5 5.5Z" fill="#9a9a9a"/><circle cx="8" cy="5.5" r="3.4" fill="#f1f1f1"/><circle cx="8" cy="5.5" r="2.1" fill="#9a9a9a"/></svg>
<svg class="abs" style="left:112px;top:944px" width="16" height="16" viewBox="0 0 16 16" ><defs><linearGradient id="bg" x1="0" x2="1"><stop offset="0" stop-color="#c9cdd3"/><stop offset=".55" stop-color="#f4f5f7"/><stop offset="1" stop-color="#fff"/></linearGradient></defs><path d="M1 3.5C1 1.8 3 0.8 8 0.8C13 0.8 15 1.8 15 3.5V12.5C15 14.2 13 15.2 8 15.2C3 15.2 1 14.2 1 12.5Z" fill="#fff" stroke="#30343c" stroke-width="1.25"/><path d="M3.2 5.4C5 6.2 11 6.2 12.8 5.4V12.3C11 13.3 5 13.3 3.2 12.3Z" fill="url(#bg)"/></svg>
<div class="lbl" style="left:142px;top:945px"><span class="k" style="width:54.67px;transform:scaleX(0.710)">パッド・ボタン</span><span class="k" style="width:7.15px;transform:scaleX(0.900)">C</span></div>
<div class="row" style="left:84px;top:966.5px;width:130px"></div>
<svg class="abs" style="left:87px;top:970.5px" width="16" height="11" viewBox="0 0 16 11" ><path d="M0.5 5.5C3 1.5 6 0.5 8 0.5C10 0.5 13 1.5 15.5 5.5C13 9.5 10 10.5 8 10.5C6 10.5 3 9.5 0.5 5.5Z" fill="#9a9a9a"/><circle cx="8" cy="5.5" r="3.4" fill="#f1f1f1"/><circle cx="8" cy="5.5" r="2.1" fill="#9a9a9a"/></svg>
<svg class="abs" style="left:112px;top:968px" width="16" height="16" viewBox="0 0 16 16" ><defs><linearGradient id="bg" x1="0" x2="1"><stop offset="0" stop-color="#c9cdd3"/><stop offset=".55" stop-color="#f4f5f7"/><stop offset="1" stop-color="#fff"/></linearGradient></defs><path d="M1 3.5C1 1.8 3 0.8 8 0.8C13 0.8 15 1.8 15 3.5V12.5C15 14.2 13 15.2 8 15.2C3 15.2 1 14.2 1 12.5Z" fill="#fff" stroke="#30343c" stroke-width="1.25"/><path d="M3.2 5.4C5 6.2 11 6.2 12.8 5.4V12.3C11 13.3 5 13.3 3.2 12.3Z" fill="url(#bg)"/></svg>
<div class="lbl" style="left:142px;top:969px"><span class="k" style="width:54.67px;transform:scaleX(0.710)">パッド・ボタン</span><span class="k" style="width:7.15px;transform:scaleX(0.900)">D</span></div>
<div class="row" style="left:84px;top:990.5px;width:130px"></div>
<svg class="abs" style="left:87px;top:994.5px" width="16" height="11" viewBox="0 0 16 11" ><path d="M0.5 5.5C3 1.5 6 0.5 8 0.5C10 0.5 13 1.5 15.5 5.5C13 9.5 10 10.5 8 10.5C6 10.5 3 9.5 0.5 5.5Z" fill="#9a9a9a"/><circle cx="8" cy="5.5" r="3.4" fill="#f1f1f1"/><circle cx="8" cy="5.5" r="2.1" fill="#9a9a9a"/></svg>
<svg class="abs" style="left:112px;top:992px" width="16" height="16" viewBox="0 0 16 16" ><defs><linearGradient id="bg" x1="0" x2="1"><stop offset="0" stop-color="#c9cdd3"/><stop offset=".55" stop-color="#f4f5f7"/><stop offset="1" stop-color="#fff"/></linearGradient></defs><path d="M1 3.5C1 1.8 3 0.8 8 0.8C13 0.8 15 1.8 15 3.5V12.5C15 14.2 13 15.2 8 15.2C3 15.2 1 14.2 1 12.5Z" fill="#fff" stroke="#30343c" stroke-width="1.25"/><path d="M3.2 5.4C5 6.2 11 6.2 12.8 5.4V12.3C11 13.3 5 13.3 3.2 12.3Z" fill="url(#bg)"/></svg>
<div class="lbl" style="left:142px;top:993px"><span class="k" style="width:54.67px;transform:scaleX(0.710)">パッド・ボタン</span><span class="k" style="width:6.60px;transform:scaleX(0.900)">E</span></div>
<div class="row" style="left:84px;top:1014.5px;width:130px"></div>
<svg class="abs" style="left:87px;top:1018.5px" width="16" height="11" viewBox="0 0 16 11" ><path d="M0.5 5.5C3 1.5 6 0.5 8 0.5C10 0.5 13 1.5 15.5 5.5C13 9.5 10 10.5 8 10.5C6 10.5 3 9.5 0.5 5.5Z" fill="#9a9a9a"/><circle cx="8" cy="5.5" r="3.4" fill="#f1f1f1"/><circle cx="8" cy="5.5" r="2.1" fill="#9a9a9a"/></svg>
<svg class="abs" style="left:112px;top:1016px" width="16" height="16" viewBox="0 0 16 16" ><defs><linearGradient id="bg" x1="0" x2="1"><stop offset="0" stop-color="#c9cdd3"/><stop offset=".55" stop-color="#f4f5f7"/><stop offset="1" stop-color="#fff"/></linearGradient></defs><path d="M1 3.5C1 1.8 3 0.8 8 0.8C13 0.8 15 1.8 15 3.5V12.5C15 14.2 13 15.2 8 15.2C3 15.2 1 14.2 1 12.5Z" fill="#fff" stroke="#30343c" stroke-width="1.25"/><path d="M3.2 5.4C5 6.2 11 6.2 12.8 5.4V12.3C11 13.3 5 13.3 3.2 12.3Z" fill="url(#bg)"/></svg>
<div class="lbl" style="left:142px;top:1017px"><span class="k" style="width:54.67px;transform:scaleX(0.710)">パッド・ボタン</span><span class="k" style="width:6.05px;transform:scaleX(0.900)">F</span></div>
<div class="row" style="left:84px;top:1038.5px;width:176px"></div>
<svg class="abs" style="left:87px;top:1042.5px" width="16" height="11" viewBox="0 0 16 11" ><path d="M0.5 5.5C3 1.5 6 0.5 8 0.5C10 0.5 13 1.5 15.5 5.5C13 9.5 10 10.5 8 10.5C6 10.5 3 9.5 0.5 5.5Z" fill="#9a9a9a"/><circle cx="8" cy="5.5" r="3.4" fill="#f1f1f1"/><circle cx="8" cy="5.5" r="2.1" fill="#9a9a9a"/></svg>
<svg class="abs" style="left:112px;top:1040px" width="16" height="16" viewBox="0 0 16 16" ><defs><linearGradient id="bg" x1="0" x2="1"><stop offset="0" stop-color="#c9cdd3"/><stop offset=".55" stop-color="#f4f5f7"/><stop offset="1" stop-color="#fff"/></linearGradient></defs><path d="M1 3.5C1 1.8 3 0.8 8 0.8C13 0.8 15 1.8 15 3.5V12.5C15 14.2 13 15.2 8 15.2C3 15.2 1 14.2 1 12.5Z" fill="#fff" stroke="#30343c" stroke-width="1.25"/><path d="M3.2 5.4C5 6.2 11 6.2 12.8 5.4V12.3C11 13.3 5 13.3 3.2 12.3Z" fill="url(#bg)"/></svg>
<div class="lbl" style="left:142px;top:1041px"><span class="k" style="width:31.24px;transform:scaleX(0.710)">パッド・</span><span class="k" style="width:21.01px;transform:scaleX(0.955)">十字</span><span class="k" style="width:23.43px;transform:scaleX(0.710)">ボタン</span><span class="k" style="width:34.65px;transform:scaleX(1.050)"> (1) (1)</span></div>
<svg class="abs" style="left:46px;top:1066px" width="13" height="13" viewBox="0 0 13 13" ><defs><linearGradient id="tg" x1="0" y1="1" x2="1" y2="0"><stop offset="0" stop-color="#333"/><stop offset="1" stop-color="#bbb"/></linearGradient></defs><path d="M12 1V12H1Z" fill="url(#tg)" stroke="#222" stroke-width="1"/></svg>
<div class="row" style="left:66px;top:1062.5px;width:111px"></div>
<svg class="abs" style="left:69px;top:1066.5px" width="16" height="11" viewBox="0 0 16 11" ><path d="M0.5 5.5C3 1.5 6 0.5 8 0.5C10 0.5 13 1.5 15.5 5.5C13 9.5 10 10.5 8 10.5C6 10.5 3 9.5 0.5 5.5Z" fill="#9a9a9a"/><circle cx="8" cy="5.5" r="3.4" fill="#f1f1f1"/><circle cx="8" cy="5.5" r="2.1" fill="#9a9a9a"/></svg>
<svg class="abs" style="left:94px;top:1065px" width="16" height="14" viewBox="0 0 16 14" ><path d="M0.5 1.5H6.5L7.5 3.5H15.5V12.5H0.5Z" fill="#9e9e9e"/><path d="M0.5 3.2H7" stroke="#f1f1f1" stroke-width=".7"/></svg>
<div class="lbl" style="left:124px;top:1065px"><span class="k" style="width:39.05px;transform:scaleX(0.710)">キャンバス</span></div>
<div class="row" style="left:84px;top:1086.5px;width:107px"></div>
<svg class="abs" style="left:87px;top:1089.5px" width="16" height="13" viewBox="0 0 16 13" ><path d="M0.8 6.5C3 3 6 2 8 2C10 2 13 3 15.2 6.5C13 10 10 11 8 11C6 11 3 10 0.8 6.5Z" fill="none" stroke="#9a9a9a" stroke-width=".9"/><circle cx="8" cy="6.5" r="2.6" fill="none" stroke="#9a9a9a" stroke-width=".9"/><path d="M2.5 1L13.5 12" stroke="#9a9a9a" stroke-width="1"/><path d="M3.6 0.4L14.6 11.4" stroke="#f1f1f1" stroke-width=".8"/></svg>
<svg class="abs" style="left:112px;top:1088px" width="16" height="16" viewBox="0 0 16 16" ><rect x="0.5" y="0.5" width="15" height="15" fill="#8ec5f1" stroke="#444" stroke-width="1"/><path d="M1 11L6 6L10 10L12 8L15 11V15H1Z" fill="#6f7f8f"/><path d="M8 15L15 8V15Z" fill="#c9ced4"/><circle cx="11.5" cy="4.5" r="1.6" fill="#f6e58a"/><circle cx="4.5" cy="11.5" r="3.3" fill="none" stroke="#d11" stroke-width="1.3"/><path d="M2.3 9.3L6.7 13.7" stroke="#d11" stroke-width="1.3"/></svg>
<div class="lbl" style="left:142px;top:1089px;font-size:11px">anecpc1</div>
<div class="hdr" style="top:1130.5px;height:25px;border-top-color:#ececec;border-right-color:#dcdcdc"></div>
<div class="t" style="left:37px;top:1139px;font-size:11px;color:#444"><span class="k" style="width:31.68px;transform:scaleX(0.720)">コメント</span></div>
<svg class="abs" style="left:290px;top:1137.5px" width="11" height="11" viewBox="0 0 11 11" ><circle cx="5.5" cy="5.5" r="4.8" fill="#222"/><path d="M2.8 5.5H8.2M5.5 2.8V8.2" stroke="#fff" stroke-width="1.3"/></svg>
<div class="abs" style="left:850px;top:1130px;width:237px;height:24px;background:#f0f0f0"></div>
<svg class="abs" style="left:852px;top:1133px" width="20" height="18" viewBox="0 0 20 18" ><path d="M10 16.5V3" stroke="#333" stroke-width="1.3"/><path d="M7.6 5L10 0.8L12.4 5Z" fill="#fff" stroke="#333" stroke-width=".8"/><path d="M8.5 7.8C4 8.2 2 9.6 2.8 11C4 13 12 13.2 15.5 11.4C17.6 10.2 16.5 8.6 12 8" fill="none" stroke="#333" stroke-width="1.1"/><path d="M5.5 10.6L2 12L5.5 14.4Z" fill="#333"/></svg>
<svg class="abs" style="left:874px;top:1139.5px" width="6" height="5" viewBox="0 0 6 5" ><path d="M0.2 0.3H5.8L3 4.5Z" fill="#222"/></svg>
<svg class="abs" style="left:885px;top:1134px" width="18" height="17" viewBox="0 0 18 17" ><path d="M1.5 6H16.5V15.5H1.5Z" fill="#f8f8f8" stroke="#333" stroke-width="1.1"/><rect x="4.5" y="9" width="9" height="3.8" fill="#b8bfd0" stroke="#333" stroke-width=".8"/><path d="M3 6L8 1.5V4L11 2L10.5 4.5L14 3" fill="none" stroke="#333" stroke-width=".9"/></svg>
<svg class="abs" style="left:911px;top:1133px" width="18" height="19" viewBox="0 0 18 19" ><path d="M5.5 11V4.5C5.5 3.3 7.3 3.3 7.3 4.5V9V2.8C7.3 1.6 9.1 1.6 9.1 2.8V9V3.2C9.1 2 10.9 2 10.9 3.2V9.2V5C10.9 3.9 12.6 3.9 12.6 5V12C12.6 15 11.5 17.5 8.5 17.5C6.5 17.5 5.5 16.5 4.3 14.5L1.8 10.5C1.3 9.5 2.5 8.6 3.4 9.5Z" fill="#fdfdfd" stroke="#333" stroke-width=".9"/></svg>
<svg class="abs" style="left:937px;top:1134px" width="20" height="18" viewBox="0 0 20 18" ><circle cx="6.5" cy="7.5" r="5" fill="#e4f0f2" stroke="#333" stroke-width="1.2"/><path d="M10 11L14.5 16" stroke="#333" stroke-width="2.4"/><path d="M13 3.5H18M15.5 1V6M13.5 8.5H17.5" stroke="#333" stroke-width="1"/></svg>
<svg class="abs" style="left:963px;top:1133px" width="20" height="20" viewBox="0 0 20 20" ><rect x="1" y="1.5" width="14.5" height="14.5" fill="none" stroke="#333" stroke-width=".9" stroke-dasharray="2 1.3"/><circle cx="8" cy="8" r="6.4" fill="#e4f0f2" stroke="#333" stroke-width="1.2"/><path d="M12.3 12.6L17 17.5" stroke="#333" stroke-width="2.6"/></svg>
<svg class="abs" style="left:985px;top:1139.5px" width="6" height="5" viewBox="0 0 6 5" ><path d="M0.2 0.3H5.8L3 4.5Z" fill="#222"/></svg>
<svg class="abs" style="left:996px;top:1134px" width="18" height="17" viewBox="0 0 18 17" ><rect x="1" y="0.8" width="15.5" height="11.5" fill="#fff" stroke="#333" stroke-width="1.1"/><rect x="3" y="2.8" width="11.5" height="7.5" fill="#7f9fd6"/><path d="M6.5 12.5L5.5 15.5H12L11 12.5" fill="#ddd" stroke="#333" stroke-width=".8"/></svg>
<svg class="abs" style="left:1016px;top:1139.5px" width="6" height="5" viewBox="0 0 6 5" ><path d="M0.2 0.3H5.8L3 4.5Z" fill="#222"/></svg>
<svg class="abs" style="left:1028px;top:1134px" width="17" height="17" viewBox="0 0 17 17" ><rect x="0.5" y="0.5" width="16" height="16" fill="#8a8d96" stroke="#555" stroke-width=".8"/><path d="M4 1V16M1 4H16" stroke="#fff" stroke-width=".9"/><path d="M7 1V16M1 7H16" stroke="#fff" stroke-width=".9"/><path d="M10 1V16M1 10H16" stroke="#fff" stroke-width=".9"/><path d="M13 1V16M1 13H16" stroke="#fff" stroke-width=".9"/></svg>
<svg class="abs" style="left:1047px;top:1139.5px" width="6" height="5" viewBox="0 0 6 5" ><path d="M0.2 0.3H5.8L3 4.5Z" fill="#222"/></svg>
<svg class="abs" style="left:1058px;top:1135px" width="17" height="15" viewBox="0 0 17 15" ><g fill="#9db6e6" stroke="#3b4f86" stroke-width="1"><rect x="0.6" y="0.6" width="7" height="6"/><rect x="9.2" y="0.6" width="7" height="6"/><rect x="0.6" y="8.2" width="7" height="6"/><rect x="9.2" y="8.2" width="7" height="6"/></g></svg>
<svg class="abs" style="left:1077px;top:1139.5px" width="6" height="5" viewBox="0 0 6 5" ><path d="M0.2 0.3H5.8L3 4.5Z" fill="#222"/></svg>
<div class="abs" style="left:0;top:0;width:8px;height:25px;background:#dfe3ec"></div>
<div class="abs" style="left:0;top:25px;width:8px;height:80px;background:#fff;overflow:hidden"><div class="abs" style="left:-22px;top:23px;width:27px;height:27px;border-radius:50%;background:#cfe0f8"></div><svg class="abs" style="left:-1px;top:66px" width="7" height="5"><path d="M0 4.5L3 1L6.5 4.5" fill="none" stroke="#222" stroke-width="1.3"/></svg></div>
<div class="abs" style="left:0;top:104px;width:6.4px;height:377px;background:#555"></div>
<div class="abs" style="left:0;top:481px;width:8px;height:560px;background:#fff"></div>
<svg class="abs" style="left:-2px;top:1027px" width="7" height="6"><path d="M0 0.5H6L3 4.5Z" fill="#333"/></svg>
<div class="abs" style="left:0;top:1040px;width:8px;height:128px;background:#000"></div>
<div class="abs" style="left:0;top:1060px;width:8px;height:20px;background:#151515;overflow:hidden"><span class="abs" style="left:-4.5px;top:2px;font-size:13px;line-height:14px;color:#f2f2f2">3</span></div>
<div class="abs" style="left:0;top:1160px;width:1928px;height:8px;background:#101010"></div>
<div class="abs" style="left:57px;top:1160px;width:287px;height:8px;background:#ebebeb;border-top:1px solid #bbb"></div>
<div class="abs" style="left:838px;top:1160px;width:46px;height:8px;background:#333"></div>
<div class="abs" style="left:1921px;top:1160px;width:1px;height:8px;background:#777"></div>
<div class="abs" style="left:1826px;top:1166px;width:26px;height:2px;background:#ccc;opacity:.7"></div>
</body></html>
